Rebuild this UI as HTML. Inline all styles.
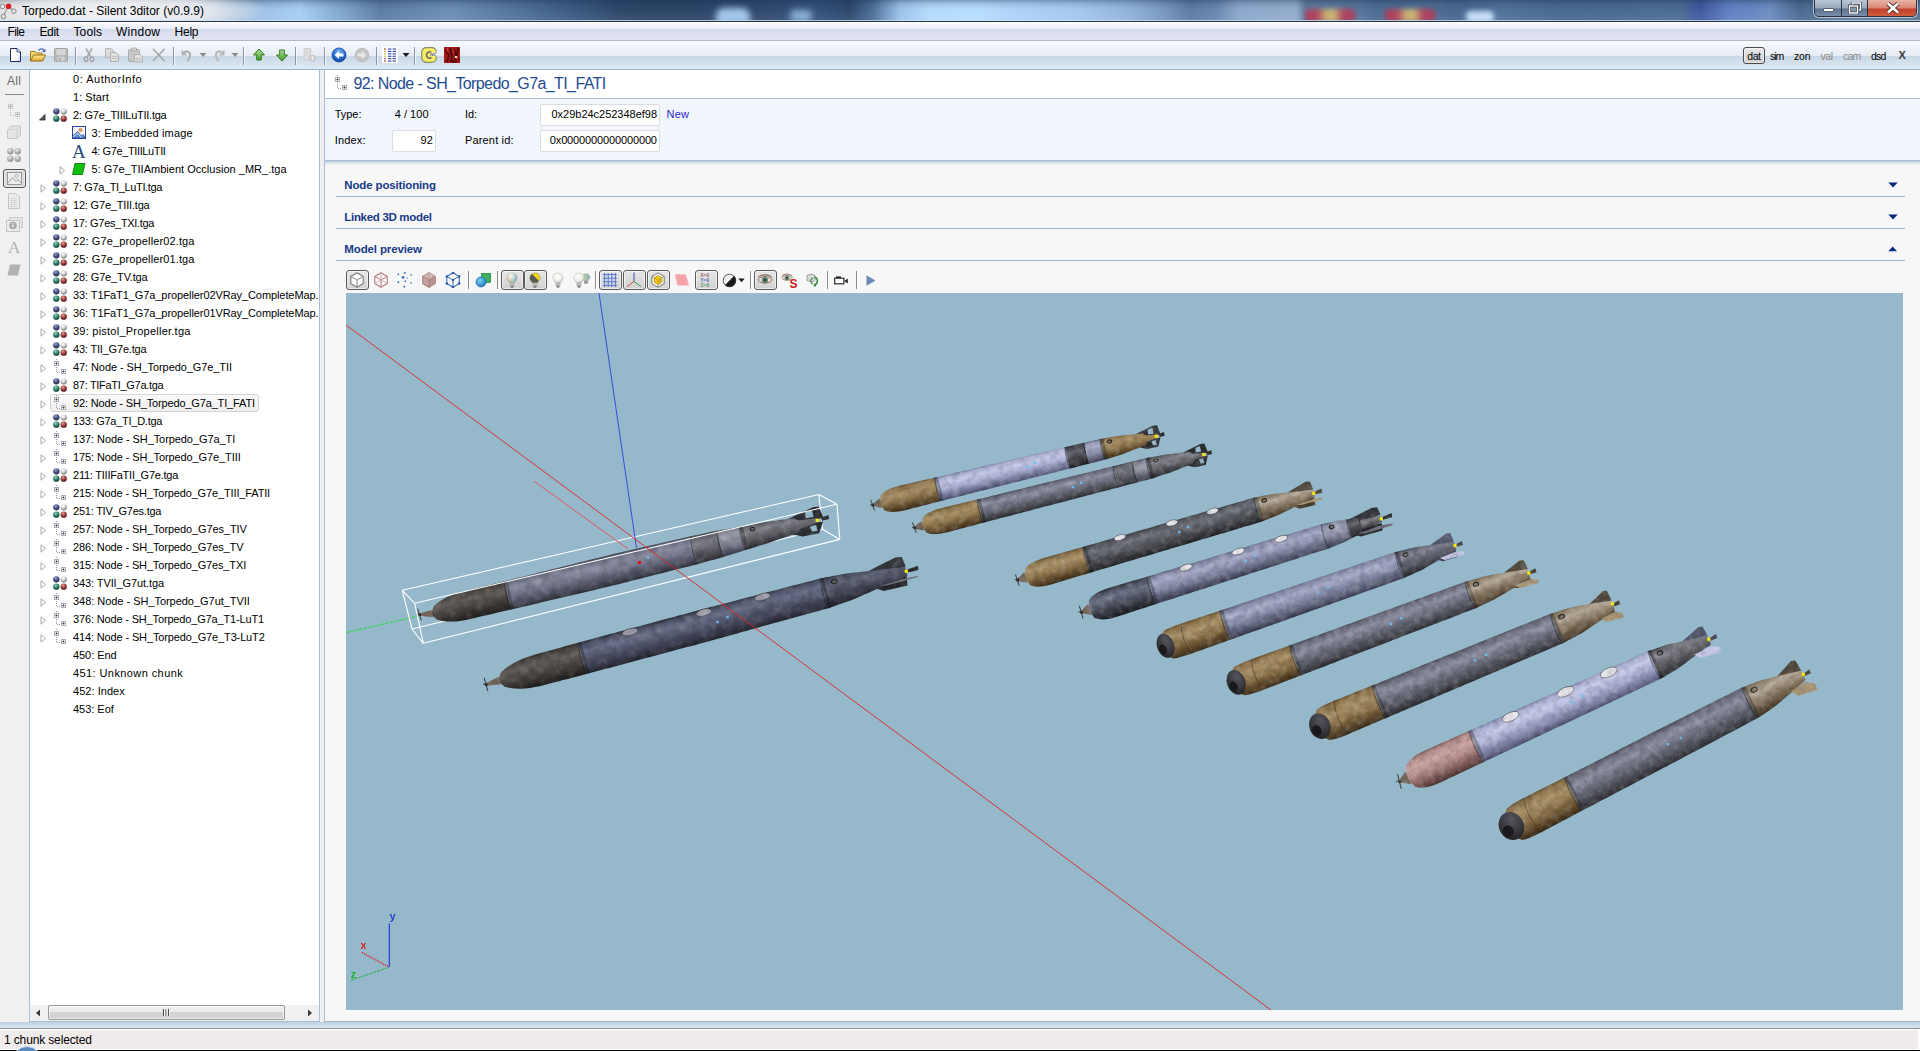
<!DOCTYPE html>
<html lang="en"><head><meta charset="utf-8"><title>Torpedo.dat - Silent 3ditor (v0.9.9)</title>
<style>
*{box-sizing:border-box;margin:0;padding:0}
html,body{width:1920px;height:1051px;overflow:hidden;background:#f7f8fa;font-family:"Liberation Sans",sans-serif}
.a{position:absolute}
.t{position:absolute;white-space:pre}
#title{left:0;top:0;width:1920px;height:21px;background:
 linear-gradient(90deg,#d6d6d3 0px,#d9dbdd 120px,#c9d3de 200px,#a9c2dc 235px,#9cc0e6 262px,#a6cef2 300px,#86acd4 335px,#5b7ca3 380px,#6c8eb5 450px,#4f7098 520px,#3f5f88 560px,#2c4669 620px,#2a4366 690px,#2d476b 722px,#2f496e 768px,#34507a 800px,#33507a 822px,#2c476b 850px,#4a6d96 872px,#9cc2ea 900px,#b4dafc 930px,#b6dcfd 980px,#aed3f8 1010px,#a3c6ee 1080px,#8fb1da 1130px,#7595bd 1165px,#5b7ba3 1190px,#6785ad 1215px,#8ba7ca 1240px,#91abcc 1296px,#5f7a9f 1306px,#56759b 1360px,#4b6a92 1375px,#4e6d94 1433px,#46668e 1455px,#4f7098 1500px,#476890 1560px,#4a6b93 1680px,#4057a0 1700px,#5f80c4 1730px,#6c8cc0 1770px,#4a6a90 1800px,#5c7a9c 1850px,#54718f 1920px)}
#title:before{content:"";position:absolute;left:0;top:0;width:1920px;height:21px;background:linear-gradient(180deg,rgba(20,40,70,.35) 0,rgba(20,40,70,.12) 4px,rgba(255,255,255,0) 9px,rgba(255,255,255,.08) 21px)}
#tline{left:0;top:20px;width:1920px;height:2px;background:linear-gradient(180deg,rgba(205,228,246,.75) 0,rgba(205,228,246,.75) 1px,#2a3442 1px,#2a3442 2px)}
#menu{left:0;top:22px;width:1920px;height:19px;background:linear-gradient(180deg,#ffffff 0,#f4f5fb 3px,#e9ecf6 7px,#d3daec 7px,#dcdff0 12px,#e2e4f3 18px);border-bottom:1px solid #b5b7c6}
#tool{left:0;top:41px;width:1920px;height:28px;background:linear-gradient(180deg,#f8f9fd 0,#eef2f8 8px,#e6ecf4 15px,#c8d7e6 15px,#d2dfeb 21px,#dee8f2 26px,#ddeafa 27px,#ddeafa 28px);}
#toolb{left:0;top:69px;width:1920px;height:1px;background:#9fb3c8}

#strip{left:0;top:70px;width:29px;height:952px;background:#f0f0f0}
#tree{left:29px;top:70px;width:291px;height:952px;background:#fff;border-left:1px solid #a9bdd6;border-right:1px solid #a9bdd6;border-bottom:1px solid #a9bdd6;overflow:hidden}
#split{left:320px;top:70px;width:4px;height:952px;background:#f0f0f0}

#rp{left:324px;top:70px;width:1596px;height:952px;background:#f7f7f7;border-left:1px solid #a9bdd6}
#hd{left:325px;top:70px;width:1595px;height:29px;background:#fff;border-bottom:1px solid #a9bdd6}
#info{left:325px;top:99px;width:1595px;height:62px;background:#f1f5fc;border-bottom:1px solid #a7bdd8}
#infosh{left:325px;top:161px;width:1595px;height:6px;background:linear-gradient(180deg,#b9c7d8 0,#dfe5ec 2px,#f2f4f6 4px,#f7f7f7 6px)}
.tb{position:absolute;background:#fff;border:1px solid #d9dde3;border-radius:2px}
.hl{position:absolute;left:336px;width:1569px;height:1px;background:#9fb1c7}
.pb{position:absolute;top:269px;width:23px;height:22px;border:1px solid #5a5a5a;border-radius:3px;background:linear-gradient(180deg,#e6e6e6,#d2d2d2);box-shadow:inset 0 0 0 1px rgba(255,255,255,.55)}
#band{left:0;top:1021px;width:1920px;height:9px;background:linear-gradient(180deg,#a4b6c8 0,#a4b6c8 1px,#bccfe0 1px,#d8e8f4 7px,#868e98 7px,#868e98 8px,#ffffff 8px)}
#status{left:0;top:1030px;width:1920px;height:20px;background:#f0eceb;border-bottom:1px solid #fff;border-right:2px solid #fff}
#bl{left:0;top:1050px;width:1920px;height:1px;background:#0a0a0a}
</style></head>
<body>
<div id="rp" class="a"></div><div id="hd" class="a"></div><div id="info" class="a"></div><div id="infosh" class="a"></div>
<svg class="a" style="left:333px;top:75px" width="16" height="16" viewBox="0 0 16 16"><g opacity="1.0"><path d="M4.5 0 V13.5 H10" stroke="#9a9a9a" stroke-width="1" stroke-dasharray="1 1" fill="none"/><rect x="2.5" y="2.5" width="4" height="4" fill="#fff" stroke="#a4aeb8" stroke-width="1"/><path d="M3.4 4.5H5.6M4.5 3.4V5.6" stroke="#3a3e44" stroke-width=".9"/><rect x="9.5" y="10.5" width="4" height="4" fill="#fff" stroke="#a4aeb8" stroke-width="1"/><path d="M10.4 12.5H12.6M11.5 11.4V13.6" stroke="#3a3e44" stroke-width=".9"/></g></svg>
<div class="tb" style="left:540px;top:104px;width:120px;height:22px"></div>
<div class="tb" style="left:392px;top:130px;width:44px;height:22px"></div>
<div class="tb" style="left:540px;top:130px;width:120px;height:22px"></div>
<div class="hl" style="top:196px"></div>
<svg class="a" style="left:1888px;top:182px" width="10" height="6" viewBox="0 0 10 6"><path d="M.3 .6 H9.7 L5 5.6 Z" fill="#0a2a82"/></svg>
<div class="hl" style="top:228px"></div>
<svg class="a" style="left:1888px;top:214px" width="10" height="6" viewBox="0 0 10 6"><path d="M.3 .6 H9.7 L5 5.6 Z" fill="#0a2a82"/></svg>
<div class="hl" style="top:260px"></div>
<svg class="a" style="left:1888px;top:246px" width="10" height="6" viewBox="0 0 10 6"><path d="M.3 5.2 H9 L4.7 .6 Z" fill="#0a2a82"/></svg>
<div id="band" class="a"></div><div id="status" class="a"></div><div id="bl" class="a"></div>
<div class="a" style="left:12px;top:1046px;width:30px;height:30px;border-radius:15px;border:1px solid #cfe4f6;background:#5a8cc0"></div>
<div id="strip" class="a"></div><div id="tree" class="a"></div><div id="split" class="a"></div>
<svg class="a" style="left:0px;top:0px" width="0" height="0" viewBox="0 0 0 0"><defs>
<radialGradient id="bB" cx=".4" cy=".3" r=".75"><stop offset="0" stop-color="#9aa2c8"/><stop offset=".5" stop-color="#4a5484"/><stop offset="1" stop-color="#1c2040"/></radialGradient>
<radialGradient id="bW" cx=".4" cy=".3" r=".75"><stop offset="0" stop-color="#ffffff"/><stop offset=".55" stop-color="#c9c9c9"/><stop offset="1" stop-color="#5a5a5a"/></radialGradient>
<radialGradient id="bG" cx=".4" cy=".3" r=".75"><stop offset="0" stop-color="#8fd8c0"/><stop offset=".5" stop-color="#2f806a"/><stop offset="1" stop-color="#0c3a30"/></radialGradient>
<radialGradient id="bR" cx=".4" cy=".3" r=".75"><stop offset="0" stop-color="#e0a098"/><stop offset=".5" stop-color="#9c3e3a"/><stop offset="1" stop-color="#421412"/></radialGradient>
<radialGradient id="bY" cx=".4" cy=".3" r=".75"><stop offset="0" stop-color="#ececec"/><stop offset=".55" stop-color="#b0b0b0"/><stop offset="1" stop-color="#8c8c8c"/></radialGradient>
</defs></svg>
<div class="a" style="left:5px;top:94px;width:19px;height:1px;background:#8a8a8a"></div>
<svg class="a" style="left:6px;top:102px" width="16" height="16" viewBox="0 0 16 16"><g opacity="0.55"><path d="M4.5 0 V13.5 H10" stroke="#9a9a9a" stroke-width="1" stroke-dasharray="1 1" fill="none"/><rect x="2.5" y="2.5" width="4" height="4" fill="#fff" stroke="#a4aeb8" stroke-width="1"/><path d="M3.4 4.5H5.6M4.5 3.4V5.6" stroke="#3a3e44" stroke-width=".9"/><rect x="9.5" y="10.5" width="4" height="4" fill="#fff" stroke="#a4aeb8" stroke-width="1"/><path d="M10.4 12.5H12.6M11.5 11.4V13.6" stroke="#3a3e44" stroke-width=".9"/></g></svg>
<svg class="a" style="left:6px;top:124px" width="16" height="17" viewBox="0 0 16 17"><path d="M1.5 5.5 L5 2 H14.5 V11 L11 14.5 H1.5 Z" fill="#e4e4e4" stroke="#c6c6c6"/><path d="M1.5 5.5 H11 V14.5 M11 5.5 L14.5 2" fill="none" stroke="#cfcfcf"/></svg>
<svg class="a" style="left:6px;top:147px" width="16" height="16" viewBox="0 0 16 16"><circle cx="4.3" cy="4.3" r="3.2" fill="url(#bY)"/><circle cx="11.7" cy="4.3" r="3.2" fill="url(#bY)"/><circle cx="4.3" cy="11.7" r="3.2" fill="url(#bY)"/><circle cx="11.7" cy="11.7" r="3.2" fill="url(#bY)"/></svg>
<div class="a" style="left:3px;top:169px;width:23px;height:19px;border:1px solid #555;border-radius:3px;background:#d9d9d9;box-shadow:inset 0 0 0 1px #ececec"></div>
<svg class="a" style="left:7px;top:172px" width="15" height="13" viewBox="0 0 15 13"><rect x=".5" y=".5" width="14" height="12" fill="#ececec" stroke="#9a9a9a"/><circle cx="9.5" cy="4" r="1.5" fill="none" stroke="#a0a0a0" stroke-width=".8"/><path d="M1 11 L5.5 5.5 L9 9.5 L11 7.5 L14 11" fill="none" stroke="#a0a0a0" stroke-width="1"/></svg>
<svg class="a" style="left:8px;top:193px" width="12" height="16" viewBox="0 0 12 16"><path d="M.5 .5 H8 L11.5 4 V15.5 H.5 Z" fill="#ececec" stroke="#c4c4c4"/><path d="M2.5 5.5H9M2.5 7.5H9M2.5 9.5H9M2.5 11.5H9M2.5 13.5H9" stroke="#c0c0c0" stroke-width=".9" stroke-dasharray="2 1"/></svg>
<svg class="a" style="left:6px;top:217px" width="17" height="15" viewBox="0 0 17 15"><rect x="3.5" y=".5" width="13" height="10" fill="#e6e6e6" stroke="#cacaca"/><rect x=".5" y="3.5" width="13" height="11" fill="#ececec" stroke="#c4c4c4"/><circle cx="7" cy="8.5" r="3.8" fill="#a8a8a8"/><path d="M7 6V6.8M7 7.6V10.4" stroke="#f4f4f4" stroke-width="1.3"/></svg>
<svg class="a" style="left:7px;top:264px" width="14" height="12" viewBox="0 0 14 12"><path d="M3 .5 H13.5 L11 11.5 H.5 Z" fill="#b2b2b2"/></svg>
<svg class="a" style="left:38.5px;top:114px" width="7" height="7" viewBox="0 0 7 7"><path d="M6 .5 V6 H.5 Z" fill="#595959" stroke="#262626" stroke-width=".8"/></svg>
<svg class="a" style="left:52px;top:107px" width="16" height="16" viewBox="0 0 16 16"><circle cx="4.3" cy="4.3" r="3.15" fill="url(#bB)"/><circle cx="11.7" cy="4.3" r="3.15" fill="url(#bW)"/><circle cx="4.3" cy="11.7" r="3.15" fill="url(#bG)"/><circle cx="11.7" cy="11.7" r="3.15" fill="url(#bR)"/></svg>
<svg class="a" style="left:72px;top:126px" width="14" height="13" viewBox="0 0 14 13"><rect x=".5" y=".5" width="13" height="12" fill="#f4f7fc" stroke="#2a3f9a"/><circle cx="8.5" cy="4" r="1.6" fill="#f0a040" stroke="#c06820" stroke-width=".6"/><path d="M1 12 L1 9.5 L5.5 5.5 L9.5 10 L11 8.5 L13 10.5 V12 Z" fill="#5b8bd0" stroke="#2a4a9a" stroke-width=".7"/><path d="M1 11 L5.5 7 L9.5 11.5" fill="none" stroke="#fff" stroke-width=".8"/></svg>
<svg class="a" style="left:58.5px;top:165.5px" width="7" height="9" viewBox="0 0 7 9"><path d="M1 .8 L5.6 4.5 L1 8.2 Z" fill="#fff" stroke="#a6a6a6" stroke-width="1"/></svg>
<svg class="a" style="left:72px;top:163px" width="14" height="12" viewBox="0 0 14 12"><path d="M3 .5 H13 L10.5 11.5 H.5 Z" fill="#10c010" stroke="#0a7a0a" stroke-width=".9"/></svg>
<svg class="a" style="left:39.5px;top:183.5px" width="7" height="9" viewBox="0 0 7 9"><path d="M1 .8 L5.6 4.5 L1 8.2 Z" fill="#fff" stroke="#a6a6a6" stroke-width="1"/></svg>
<svg class="a" style="left:52px;top:179px" width="16" height="16" viewBox="0 0 16 16"><circle cx="4.3" cy="4.3" r="3.15" fill="url(#bB)"/><circle cx="11.7" cy="4.3" r="3.15" fill="url(#bW)"/><circle cx="4.3" cy="11.7" r="3.15" fill="url(#bG)"/><circle cx="11.7" cy="11.7" r="3.15" fill="url(#bR)"/></svg>
<svg class="a" style="left:39.5px;top:201.5px" width="7" height="9" viewBox="0 0 7 9"><path d="M1 .8 L5.6 4.5 L1 8.2 Z" fill="#fff" stroke="#a6a6a6" stroke-width="1"/></svg>
<svg class="a" style="left:52px;top:197px" width="16" height="16" viewBox="0 0 16 16"><circle cx="4.3" cy="4.3" r="3.15" fill="url(#bB)"/><circle cx="11.7" cy="4.3" r="3.15" fill="url(#bW)"/><circle cx="4.3" cy="11.7" r="3.15" fill="url(#bG)"/><circle cx="11.7" cy="11.7" r="3.15" fill="url(#bR)"/></svg>
<svg class="a" style="left:39.5px;top:219.5px" width="7" height="9" viewBox="0 0 7 9"><path d="M1 .8 L5.6 4.5 L1 8.2 Z" fill="#fff" stroke="#a6a6a6" stroke-width="1"/></svg>
<svg class="a" style="left:52px;top:215px" width="16" height="16" viewBox="0 0 16 16"><circle cx="4.3" cy="4.3" r="3.15" fill="url(#bB)"/><circle cx="11.7" cy="4.3" r="3.15" fill="url(#bW)"/><circle cx="4.3" cy="11.7" r="3.15" fill="url(#bG)"/><circle cx="11.7" cy="11.7" r="3.15" fill="url(#bR)"/></svg>
<svg class="a" style="left:39.5px;top:237.5px" width="7" height="9" viewBox="0 0 7 9"><path d="M1 .8 L5.6 4.5 L1 8.2 Z" fill="#fff" stroke="#a6a6a6" stroke-width="1"/></svg>
<svg class="a" style="left:52px;top:233px" width="16" height="16" viewBox="0 0 16 16"><circle cx="4.3" cy="4.3" r="3.15" fill="url(#bB)"/><circle cx="11.7" cy="4.3" r="3.15" fill="url(#bW)"/><circle cx="4.3" cy="11.7" r="3.15" fill="url(#bG)"/><circle cx="11.7" cy="11.7" r="3.15" fill="url(#bR)"/></svg>
<svg class="a" style="left:39.5px;top:255.5px" width="7" height="9" viewBox="0 0 7 9"><path d="M1 .8 L5.6 4.5 L1 8.2 Z" fill="#fff" stroke="#a6a6a6" stroke-width="1"/></svg>
<svg class="a" style="left:52px;top:251px" width="16" height="16" viewBox="0 0 16 16"><circle cx="4.3" cy="4.3" r="3.15" fill="url(#bB)"/><circle cx="11.7" cy="4.3" r="3.15" fill="url(#bW)"/><circle cx="4.3" cy="11.7" r="3.15" fill="url(#bG)"/><circle cx="11.7" cy="11.7" r="3.15" fill="url(#bR)"/></svg>
<svg class="a" style="left:39.5px;top:273.5px" width="7" height="9" viewBox="0 0 7 9"><path d="M1 .8 L5.6 4.5 L1 8.2 Z" fill="#fff" stroke="#a6a6a6" stroke-width="1"/></svg>
<svg class="a" style="left:52px;top:269px" width="16" height="16" viewBox="0 0 16 16"><circle cx="4.3" cy="4.3" r="3.15" fill="url(#bB)"/><circle cx="11.7" cy="4.3" r="3.15" fill="url(#bW)"/><circle cx="4.3" cy="11.7" r="3.15" fill="url(#bG)"/><circle cx="11.7" cy="11.7" r="3.15" fill="url(#bR)"/></svg>
<svg class="a" style="left:39.5px;top:291.5px" width="7" height="9" viewBox="0 0 7 9"><path d="M1 .8 L5.6 4.5 L1 8.2 Z" fill="#fff" stroke="#a6a6a6" stroke-width="1"/></svg>
<svg class="a" style="left:52px;top:287px" width="16" height="16" viewBox="0 0 16 16"><circle cx="4.3" cy="4.3" r="3.15" fill="url(#bB)"/><circle cx="11.7" cy="4.3" r="3.15" fill="url(#bW)"/><circle cx="4.3" cy="11.7" r="3.15" fill="url(#bG)"/><circle cx="11.7" cy="11.7" r="3.15" fill="url(#bR)"/></svg>
<svg class="a" style="left:39.5px;top:309.5px" width="7" height="9" viewBox="0 0 7 9"><path d="M1 .8 L5.6 4.5 L1 8.2 Z" fill="#fff" stroke="#a6a6a6" stroke-width="1"/></svg>
<svg class="a" style="left:52px;top:305px" width="16" height="16" viewBox="0 0 16 16"><circle cx="4.3" cy="4.3" r="3.15" fill="url(#bB)"/><circle cx="11.7" cy="4.3" r="3.15" fill="url(#bW)"/><circle cx="4.3" cy="11.7" r="3.15" fill="url(#bG)"/><circle cx="11.7" cy="11.7" r="3.15" fill="url(#bR)"/></svg>
<svg class="a" style="left:39.5px;top:327.5px" width="7" height="9" viewBox="0 0 7 9"><path d="M1 .8 L5.6 4.5 L1 8.2 Z" fill="#fff" stroke="#a6a6a6" stroke-width="1"/></svg>
<svg class="a" style="left:52px;top:323px" width="16" height="16" viewBox="0 0 16 16"><circle cx="4.3" cy="4.3" r="3.15" fill="url(#bB)"/><circle cx="11.7" cy="4.3" r="3.15" fill="url(#bW)"/><circle cx="4.3" cy="11.7" r="3.15" fill="url(#bG)"/><circle cx="11.7" cy="11.7" r="3.15" fill="url(#bR)"/></svg>
<svg class="a" style="left:39.5px;top:345.5px" width="7" height="9" viewBox="0 0 7 9"><path d="M1 .8 L5.6 4.5 L1 8.2 Z" fill="#fff" stroke="#a6a6a6" stroke-width="1"/></svg>
<svg class="a" style="left:52px;top:341px" width="16" height="16" viewBox="0 0 16 16"><circle cx="4.3" cy="4.3" r="3.15" fill="url(#bB)"/><circle cx="11.7" cy="4.3" r="3.15" fill="url(#bW)"/><circle cx="4.3" cy="11.7" r="3.15" fill="url(#bG)"/><circle cx="11.7" cy="11.7" r="3.15" fill="url(#bR)"/></svg>
<svg class="a" style="left:39.5px;top:363.5px" width="7" height="9" viewBox="0 0 7 9"><path d="M1 .8 L5.6 4.5 L1 8.2 Z" fill="#fff" stroke="#a6a6a6" stroke-width="1"/></svg>
<svg class="a" style="left:52px;top:359px" width="16" height="16" viewBox="0 0 16 16"><g opacity="1.0"><path d="M4.5 0 V13.5 H10" stroke="#9a9a9a" stroke-width="1" stroke-dasharray="1 1" fill="none"/><rect x="2.5" y="2.5" width="4" height="4" fill="#fff" stroke="#a4aeb8" stroke-width="1"/><path d="M3.4 4.5H5.6M4.5 3.4V5.6" stroke="#3a3e44" stroke-width=".9"/><rect x="9.5" y="10.5" width="4" height="4" fill="#fff" stroke="#a4aeb8" stroke-width="1"/><path d="M10.4 12.5H12.6M11.5 11.4V13.6" stroke="#3a3e44" stroke-width=".9"/></g></svg>
<svg class="a" style="left:39.5px;top:381.5px" width="7" height="9" viewBox="0 0 7 9"><path d="M1 .8 L5.6 4.5 L1 8.2 Z" fill="#fff" stroke="#a6a6a6" stroke-width="1"/></svg>
<svg class="a" style="left:52px;top:377px" width="16" height="16" viewBox="0 0 16 16"><circle cx="4.3" cy="4.3" r="3.15" fill="url(#bB)"/><circle cx="11.7" cy="4.3" r="3.15" fill="url(#bW)"/><circle cx="4.3" cy="11.7" r="3.15" fill="url(#bG)"/><circle cx="11.7" cy="11.7" r="3.15" fill="url(#bR)"/></svg>
<div class="a" style="left:50px;top:394px;width:209px;height:18px;border:1px solid #d4d4d4;border-radius:3px;background:linear-gradient(180deg,#fbfbfb,#eeeeee)"></div>
<svg class="a" style="left:39.5px;top:399.5px" width="7" height="9" viewBox="0 0 7 9"><path d="M1 .8 L5.6 4.5 L1 8.2 Z" fill="#fff" stroke="#a6a6a6" stroke-width="1"/></svg>
<svg class="a" style="left:52px;top:395px" width="16" height="16" viewBox="0 0 16 16"><g opacity="1.0"><path d="M4.5 0 V13.5 H10" stroke="#9a9a9a" stroke-width="1" stroke-dasharray="1 1" fill="none"/><rect x="2.5" y="2.5" width="4" height="4" fill="#fff" stroke="#a4aeb8" stroke-width="1"/><path d="M3.4 4.5H5.6M4.5 3.4V5.6" stroke="#3a3e44" stroke-width=".9"/><rect x="9.5" y="10.5" width="4" height="4" fill="#fff" stroke="#a4aeb8" stroke-width="1"/><path d="M10.4 12.5H12.6M11.5 11.4V13.6" stroke="#3a3e44" stroke-width=".9"/></g></svg>
<svg class="a" style="left:39.5px;top:417.5px" width="7" height="9" viewBox="0 0 7 9"><path d="M1 .8 L5.6 4.5 L1 8.2 Z" fill="#fff" stroke="#a6a6a6" stroke-width="1"/></svg>
<svg class="a" style="left:52px;top:413px" width="16" height="16" viewBox="0 0 16 16"><circle cx="4.3" cy="4.3" r="3.15" fill="url(#bB)"/><circle cx="11.7" cy="4.3" r="3.15" fill="url(#bW)"/><circle cx="4.3" cy="11.7" r="3.15" fill="url(#bG)"/><circle cx="11.7" cy="11.7" r="3.15" fill="url(#bR)"/></svg>
<svg class="a" style="left:39.5px;top:435.5px" width="7" height="9" viewBox="0 0 7 9"><path d="M1 .8 L5.6 4.5 L1 8.2 Z" fill="#fff" stroke="#a6a6a6" stroke-width="1"/></svg>
<svg class="a" style="left:52px;top:431px" width="16" height="16" viewBox="0 0 16 16"><g opacity="1.0"><path d="M4.5 0 V13.5 H10" stroke="#9a9a9a" stroke-width="1" stroke-dasharray="1 1" fill="none"/><rect x="2.5" y="2.5" width="4" height="4" fill="#fff" stroke="#a4aeb8" stroke-width="1"/><path d="M3.4 4.5H5.6M4.5 3.4V5.6" stroke="#3a3e44" stroke-width=".9"/><rect x="9.5" y="10.5" width="4" height="4" fill="#fff" stroke="#a4aeb8" stroke-width="1"/><path d="M10.4 12.5H12.6M11.5 11.4V13.6" stroke="#3a3e44" stroke-width=".9"/></g></svg>
<svg class="a" style="left:39.5px;top:453.5px" width="7" height="9" viewBox="0 0 7 9"><path d="M1 .8 L5.6 4.5 L1 8.2 Z" fill="#fff" stroke="#a6a6a6" stroke-width="1"/></svg>
<svg class="a" style="left:52px;top:449px" width="16" height="16" viewBox="0 0 16 16"><g opacity="1.0"><path d="M4.5 0 V13.5 H10" stroke="#9a9a9a" stroke-width="1" stroke-dasharray="1 1" fill="none"/><rect x="2.5" y="2.5" width="4" height="4" fill="#fff" stroke="#a4aeb8" stroke-width="1"/><path d="M3.4 4.5H5.6M4.5 3.4V5.6" stroke="#3a3e44" stroke-width=".9"/><rect x="9.5" y="10.5" width="4" height="4" fill="#fff" stroke="#a4aeb8" stroke-width="1"/><path d="M10.4 12.5H12.6M11.5 11.4V13.6" stroke="#3a3e44" stroke-width=".9"/></g></svg>
<svg class="a" style="left:39.5px;top:471.5px" width="7" height="9" viewBox="0 0 7 9"><path d="M1 .8 L5.6 4.5 L1 8.2 Z" fill="#fff" stroke="#a6a6a6" stroke-width="1"/></svg>
<svg class="a" style="left:52px;top:467px" width="16" height="16" viewBox="0 0 16 16"><circle cx="4.3" cy="4.3" r="3.15" fill="url(#bB)"/><circle cx="11.7" cy="4.3" r="3.15" fill="url(#bW)"/><circle cx="4.3" cy="11.7" r="3.15" fill="url(#bG)"/><circle cx="11.7" cy="11.7" r="3.15" fill="url(#bR)"/></svg>
<svg class="a" style="left:39.5px;top:489.5px" width="7" height="9" viewBox="0 0 7 9"><path d="M1 .8 L5.6 4.5 L1 8.2 Z" fill="#fff" stroke="#a6a6a6" stroke-width="1"/></svg>
<svg class="a" style="left:52px;top:485px" width="16" height="16" viewBox="0 0 16 16"><g opacity="1.0"><path d="M4.5 0 V13.5 H10" stroke="#9a9a9a" stroke-width="1" stroke-dasharray="1 1" fill="none"/><rect x="2.5" y="2.5" width="4" height="4" fill="#fff" stroke="#a4aeb8" stroke-width="1"/><path d="M3.4 4.5H5.6M4.5 3.4V5.6" stroke="#3a3e44" stroke-width=".9"/><rect x="9.5" y="10.5" width="4" height="4" fill="#fff" stroke="#a4aeb8" stroke-width="1"/><path d="M10.4 12.5H12.6M11.5 11.4V13.6" stroke="#3a3e44" stroke-width=".9"/></g></svg>
<svg class="a" style="left:39.5px;top:507.5px" width="7" height="9" viewBox="0 0 7 9"><path d="M1 .8 L5.6 4.5 L1 8.2 Z" fill="#fff" stroke="#a6a6a6" stroke-width="1"/></svg>
<svg class="a" style="left:52px;top:503px" width="16" height="16" viewBox="0 0 16 16"><circle cx="4.3" cy="4.3" r="3.15" fill="url(#bB)"/><circle cx="11.7" cy="4.3" r="3.15" fill="url(#bW)"/><circle cx="4.3" cy="11.7" r="3.15" fill="url(#bG)"/><circle cx="11.7" cy="11.7" r="3.15" fill="url(#bR)"/></svg>
<svg class="a" style="left:39.5px;top:525.5px" width="7" height="9" viewBox="0 0 7 9"><path d="M1 .8 L5.6 4.5 L1 8.2 Z" fill="#fff" stroke="#a6a6a6" stroke-width="1"/></svg>
<svg class="a" style="left:52px;top:521px" width="16" height="16" viewBox="0 0 16 16"><g opacity="1.0"><path d="M4.5 0 V13.5 H10" stroke="#9a9a9a" stroke-width="1" stroke-dasharray="1 1" fill="none"/><rect x="2.5" y="2.5" width="4" height="4" fill="#fff" stroke="#a4aeb8" stroke-width="1"/><path d="M3.4 4.5H5.6M4.5 3.4V5.6" stroke="#3a3e44" stroke-width=".9"/><rect x="9.5" y="10.5" width="4" height="4" fill="#fff" stroke="#a4aeb8" stroke-width="1"/><path d="M10.4 12.5H12.6M11.5 11.4V13.6" stroke="#3a3e44" stroke-width=".9"/></g></svg>
<svg class="a" style="left:39.5px;top:543.5px" width="7" height="9" viewBox="0 0 7 9"><path d="M1 .8 L5.6 4.5 L1 8.2 Z" fill="#fff" stroke="#a6a6a6" stroke-width="1"/></svg>
<svg class="a" style="left:52px;top:539px" width="16" height="16" viewBox="0 0 16 16"><g opacity="1.0"><path d="M4.5 0 V13.5 H10" stroke="#9a9a9a" stroke-width="1" stroke-dasharray="1 1" fill="none"/><rect x="2.5" y="2.5" width="4" height="4" fill="#fff" stroke="#a4aeb8" stroke-width="1"/><path d="M3.4 4.5H5.6M4.5 3.4V5.6" stroke="#3a3e44" stroke-width=".9"/><rect x="9.5" y="10.5" width="4" height="4" fill="#fff" stroke="#a4aeb8" stroke-width="1"/><path d="M10.4 12.5H12.6M11.5 11.4V13.6" stroke="#3a3e44" stroke-width=".9"/></g></svg>
<svg class="a" style="left:39.5px;top:561.5px" width="7" height="9" viewBox="0 0 7 9"><path d="M1 .8 L5.6 4.5 L1 8.2 Z" fill="#fff" stroke="#a6a6a6" stroke-width="1"/></svg>
<svg class="a" style="left:52px;top:557px" width="16" height="16" viewBox="0 0 16 16"><g opacity="1.0"><path d="M4.5 0 V13.5 H10" stroke="#9a9a9a" stroke-width="1" stroke-dasharray="1 1" fill="none"/><rect x="2.5" y="2.5" width="4" height="4" fill="#fff" stroke="#a4aeb8" stroke-width="1"/><path d="M3.4 4.5H5.6M4.5 3.4V5.6" stroke="#3a3e44" stroke-width=".9"/><rect x="9.5" y="10.5" width="4" height="4" fill="#fff" stroke="#a4aeb8" stroke-width="1"/><path d="M10.4 12.5H12.6M11.5 11.4V13.6" stroke="#3a3e44" stroke-width=".9"/></g></svg>
<svg class="a" style="left:39.5px;top:579.5px" width="7" height="9" viewBox="0 0 7 9"><path d="M1 .8 L5.6 4.5 L1 8.2 Z" fill="#fff" stroke="#a6a6a6" stroke-width="1"/></svg>
<svg class="a" style="left:52px;top:575px" width="16" height="16" viewBox="0 0 16 16"><circle cx="4.3" cy="4.3" r="3.15" fill="url(#bB)"/><circle cx="11.7" cy="4.3" r="3.15" fill="url(#bW)"/><circle cx="4.3" cy="11.7" r="3.15" fill="url(#bG)"/><circle cx="11.7" cy="11.7" r="3.15" fill="url(#bR)"/></svg>
<svg class="a" style="left:39.5px;top:597.5px" width="7" height="9" viewBox="0 0 7 9"><path d="M1 .8 L5.6 4.5 L1 8.2 Z" fill="#fff" stroke="#a6a6a6" stroke-width="1"/></svg>
<svg class="a" style="left:52px;top:593px" width="16" height="16" viewBox="0 0 16 16"><g opacity="1.0"><path d="M4.5 0 V13.5 H10" stroke="#9a9a9a" stroke-width="1" stroke-dasharray="1 1" fill="none"/><rect x="2.5" y="2.5" width="4" height="4" fill="#fff" stroke="#a4aeb8" stroke-width="1"/><path d="M3.4 4.5H5.6M4.5 3.4V5.6" stroke="#3a3e44" stroke-width=".9"/><rect x="9.5" y="10.5" width="4" height="4" fill="#fff" stroke="#a4aeb8" stroke-width="1"/><path d="M10.4 12.5H12.6M11.5 11.4V13.6" stroke="#3a3e44" stroke-width=".9"/></g></svg>
<svg class="a" style="left:39.5px;top:615.5px" width="7" height="9" viewBox="0 0 7 9"><path d="M1 .8 L5.6 4.5 L1 8.2 Z" fill="#fff" stroke="#a6a6a6" stroke-width="1"/></svg>
<svg class="a" style="left:52px;top:611px" width="16" height="16" viewBox="0 0 16 16"><g opacity="1.0"><path d="M4.5 0 V13.5 H10" stroke="#9a9a9a" stroke-width="1" stroke-dasharray="1 1" fill="none"/><rect x="2.5" y="2.5" width="4" height="4" fill="#fff" stroke="#a4aeb8" stroke-width="1"/><path d="M3.4 4.5H5.6M4.5 3.4V5.6" stroke="#3a3e44" stroke-width=".9"/><rect x="9.5" y="10.5" width="4" height="4" fill="#fff" stroke="#a4aeb8" stroke-width="1"/><path d="M10.4 12.5H12.6M11.5 11.4V13.6" stroke="#3a3e44" stroke-width=".9"/></g></svg>
<svg class="a" style="left:39.5px;top:633.5px" width="7" height="9" viewBox="0 0 7 9"><path d="M1 .8 L5.6 4.5 L1 8.2 Z" fill="#fff" stroke="#a6a6a6" stroke-width="1"/></svg>
<svg class="a" style="left:52px;top:629px" width="16" height="16" viewBox="0 0 16 16"><g opacity="1.0"><path d="M4.5 0 V13.5 H10" stroke="#9a9a9a" stroke-width="1" stroke-dasharray="1 1" fill="none"/><rect x="2.5" y="2.5" width="4" height="4" fill="#fff" stroke="#a4aeb8" stroke-width="1"/><path d="M3.4 4.5H5.6M4.5 3.4V5.6" stroke="#3a3e44" stroke-width=".9"/><rect x="9.5" y="10.5" width="4" height="4" fill="#fff" stroke="#a4aeb8" stroke-width="1"/><path d="M10.4 12.5H12.6M11.5 11.4V13.6" stroke="#3a3e44" stroke-width=".9"/></g></svg>
<div class="a" style="left:30px;top:1005px;width:289px;height:16px;background:#f0f0f0"></div>
<div class="a" style="left:48px;top:1005px;width:237px;height:15px;border:1px solid #989898;border-radius:2px;background:linear-gradient(180deg,#f3f3f3 0,#e9e9ea 45%,#d4d4d6 50%,#cfcfd1 100%);box-shadow:inset 0 0 0 1px rgba(255,255,255,.6)"></div>
<svg class="a" style="left:162px;top:1009px" width="8" height="8" viewBox="0 0 8 8"><path d="M1.5 0V7M4 0V7M6.5 0V7" stroke="#4a4a4a" stroke-width="1"/><path d="M2.5 0V7M5 0V7M7.5 0V7" stroke="#fff" stroke-width="1" opacity=".8"/></svg>
<svg class="a" style="left:35px;top:1009px" width="6" height="8" viewBox="0 0 6 8"><path d="M5 .5 V7.5 L1 4 Z" fill="#3c3c3c"/></svg>
<svg class="a" style="left:307px;top:1009px" width="6" height="8" viewBox="0 0 6 8"><path d="M1 .5 V7.5 L5 4 Z" fill="#3c3c3c"/></svg>
<div id="title" class="a"></div>
<div class="a" style="left:1305px;top:9px;width:50px;height:13px;border-radius:4px;filter:blur(2.5px);background:linear-gradient(90deg,#a83e5c 0,#b04860 25%,#c9b070 42%,#ccb674 58%,#b04860 75%,#a83e5c 100%)"></div>
<div class="a" style="left:1385px;top:9px;width:50px;height:13px;border-radius:4px;filter:blur(2.5px);background:linear-gradient(90deg,#a83e5c 0,#b04860 25%,#c9b070 42%,#ccb674 58%,#b04860 75%,#a83e5c 100%)"></div>
<div class="a" style="left:1466px;top:11px;width:28px;height:12px;border-radius:5px;filter:blur(2.5px);background:#c4ddf6"></div>
<div class="a" style="left:716px;top:8px;width:34px;height:16px;border-radius:8px 8px 0 0;filter:blur(3px);background:#a4c8ea"></div>
<div class="a" style="left:790px;top:10px;width:22px;height:12px;border-radius:5px;filter:blur(3px);background:#88aed2"></div>
<div class="a" style="left:-40px;top:-12px;width:310px;height:44px;border-radius:20px;background:radial-gradient(ellipse closest-side at center,rgba(244,245,247,.9) 0,rgba(238,240,244,.75) 60%,rgba(230,235,240,0) 100%)"></div>
<div id="tline" class="a"></div>
<svg class="a" style="left:0;top:2px" width="18" height="18" viewBox="0 0 18 18">
<path d="M8.5 4 L3 14.5 M8.5 4 L14 9" stroke="#9a9a9a" stroke-width="1.2" fill="none"/>
<circle cx="2.5" cy="4.5" r="2.3" fill="#e8e8e8" stroke="#8a8a8a" stroke-width="1"/>
<circle cx="8.5" cy="4.2" r="2.8" fill="#e02020"/>
<circle cx="13.8" cy="9.2" r="2.3" fill="#e4e4e4" stroke="#8a8a8a" stroke-width="1"/>
<circle cx="3.5" cy="14.5" r="2.3" fill="#e4e4e4" stroke="#8a8a8a" stroke-width="1"/></svg>
<div class="a" style="left:1814px;top:-1px;width:103px;height:18px;border:1px solid #2a3440;border-radius:0 0 5px 5px;overflow:hidden;box-shadow:0 0 0 1px rgba(255,255,255,.55)">
<div class="a" style="left:0;top:0;width:27px;height:17px;background:linear-gradient(180deg,#b9c6d6 0,#97a8bd 8px,#5d7390 9px,#7b92af 17px);border-right:1px solid #2a3440"></div>
<div class="a" style="left:27px;top:0;width:26px;height:17px;background:linear-gradient(180deg,#b9c6d6 0,#97a8bd 8px,#5d7390 9px,#7b92af 17px);border-right:1px solid #2a3440"></div>
<div class="a" style="left:53px;top:0;width:49px;height:17px;background:linear-gradient(180deg,#e7b3a6 0,#d98673 8px,#c2412a 9px,#d2603f 17px)"></div>
</div>
<div class="a" style="left:1823px;top:8px;width:11px;height:4px;background:#fff;border:1px solid #56606c;border-radius:1px"></div>
<svg class="a" style="left:1848px;top:2px" width="14" height="12" viewBox="0 0 14 12"><rect x="4.5" y="1" width="8" height="7" fill="none" stroke="#3d4650" stroke-width="3"/><rect x="4.5" y="1" width="8" height="7" fill="none" stroke="#fff" stroke-width="1.4"/><rect x="1.5" y="4" width="8" height="7" fill="#8497ae" stroke="#3d4650" stroke-width="3"/><rect x="1.5" y="4" width="8" height="7" fill="none" stroke="#fff" stroke-width="1.4"/></svg>
<svg class="a" style="left:1886px;top:2px" width="14" height="12" viewBox="0 0 14 12"><path d="M2 1.5 L12 10.5 M12 1.5 L2 10.5" stroke="#4a2a24" stroke-width="4.4"/><path d="M2 1.5 L12 10.5 M12 1.5 L2 10.5" stroke="#fff" stroke-width="2.6"/></svg>
<div id="menu" class="a"></div><div id="tool" class="a"></div><div id="toolb" class="a"></div>
<svg class="a" style="left:7px;top:47px" width="16" height="16" viewBox="0 0 16 16"><defs><linearGradient id="gnew" x1="0" y1="0" x2="1" y2="1"><stop offset="0" stop-color="#fff"/><stop offset=".6" stop-color="#fff"/><stop offset="1" stop-color="#c9d6ef"/></linearGradient></defs><path d="M3.5 1.5 H10 L13.5 5 V14.5 H3.5 Z" fill="url(#gnew)" stroke="#1c2a66" stroke-width="1"/><path d="M10 1.5 V5 H13.5" fill="#dfe6f5" stroke="#1c2a66" stroke-width=".8"/></svg>
<svg class="a" style="left:29px;top:47px" width="18" height="16" viewBox="0 0 18 16"><defs><linearGradient id="gop" x1="0" y1="0" x2="0" y2="1"><stop offset="0" stop-color="#ffe9a0"/><stop offset="1" stop-color="#e0a626"/></linearGradient></defs><path d="M1.5 14 V4.5 H6 L7.5 6 H13 V8" fill="#f5d67a" stroke="#a87a16" stroke-width="1"/><path d="M1.5 14 L4.5 8 H16.5 L13.5 14 Z" fill="url(#gop)" stroke="#9a6c10" stroke-width="1"/><path d="M9.5 3.5 C11.5 1.2 14.5 1.5 15.5 4" fill="none" stroke="#3a64b8" stroke-width="1.3"/><path d="M16.8 2 L16 5.4 L13 4.2 Z" fill="#3a64b8"/></svg>
<svg class="a" style="left:53px;top:47px" width="16" height="16" viewBox="0 0 16 16"><rect x="1.5" y="1.5" width="13" height="13" rx="1" fill="#b9b9b9" stroke="#a2a2a2"/><rect x="3.5" y="2" width="9" height="6" fill="#d6d6d6"/><rect x="4.5" y="10" width="7" height="4.5" fill="#d0d0d0"/><rect x="6" y="11" width="2" height="3" fill="#aaa"/></svg>
<div class="a" style="left:75px;top:47px;width:1px;height:18px;background:#8a96a6"></div><div class="a" style="left:76px;top:47px;width:1px;height:18px;background:#ffffff;opacity:.7"></div>
<svg class="a" style="left:81px;top:47px" width="16" height="16" viewBox="0 0 16 16"><path d="M5 1.5 L10 10 M11 1.5 L6 10" stroke="#a9a9a9" stroke-width="1.6" fill="none"/><ellipse cx="5" cy="12.2" rx="1.8" ry="2.2" fill="none" stroke="#a9a9a9" stroke-width="1.5"/><ellipse cx="11" cy="12.2" rx="1.8" ry="2.2" fill="none" stroke="#a9a9a9" stroke-width="1.5"/></svg>
<svg class="a" style="left:104px;top:47px" width="16" height="16" viewBox="0 0 16 16"><path d="M1.5 1.5 H7 L9.5 4 V10.5 H1.5 Z" fill="#dcdcdc" stroke="#b4b4b4"/><path d="M6.5 5.5 H12 L14.5 8 V14.5 H6.5 Z" fill="#e0e0e0" stroke="#b0b0b0"/><path d="M8 9.5H13M8 11.5H13" stroke="#b8b8b8" stroke-width=".8"/></svg>
<svg class="a" style="left:127px;top:47px" width="17" height="16" viewBox="0 0 17 16"><rect x="1.5" y="2.5" width="11" height="12" rx="1" fill="#c8c8c8" stroke="#adadad"/><rect x="4.5" y="1" width="5" height="3" fill="#d8d8d8" stroke="#a8a8a8" stroke-width=".8"/><path d="M7.5 7.5 H13 L15.5 10 V15 H7.5 Z" fill="#e2e2e2" stroke="#adadad"/><path d="M9 11.5H14M9 13H14" stroke="#b8b8b8" stroke-width=".8"/></svg>
<svg class="a" style="left:151px;top:47px" width="16" height="16" viewBox="0 0 16 16"><path d="M2.5 2.5 L13 13.5 M13 2.5 L2.5 13.5" stroke="#a8a8a8" stroke-width="1.8" stroke-linecap="round"/></svg>
<div class="a" style="left:173px;top:47px;width:1px;height:18px;background:#8a96a6"></div><div class="a" style="left:174px;top:47px;width:1px;height:18px;background:#ffffff;opacity:.7"></div>
<svg class="a" style="left:179px;top:47px" width="16" height="16" viewBox="0 0 16 16"><path d="M4 6.5 C8 2.5 12.5 5 10.5 10.5 C10 12 9 13.2 8 14" fill="none" stroke="#b2b2b2" stroke-width="2.2"/><path d="M2.5 2.5 V8.5 H8.5 Z" fill="#b2b2b2"/></svg>
<svg class="a" style="left:199px;top:52px" width="8" height="6" viewBox="0 0 8 6"><path d="M.5 1 H7.5 L4 5 Z" fill="#8c8c8c"/></svg>
<svg class="a" style="left:211px;top:47px" width="16" height="16" viewBox="0 0 16 16"><path d="M12 6.5 C8 2.5 3.5 5 5.5 10.5 C6 12 7 13.2 8 14" fill="none" stroke="#b8b8b8" stroke-width="2.2"/><path d="M13.5 2.5 V8.5 H7.5 Z" fill="#b8b8b8"/></svg>
<svg class="a" style="left:231px;top:52px" width="8" height="6" viewBox="0 0 8 6"><path d="M.5 1 H7.5 L4 5 Z" fill="#8c8c8c"/></svg>
<div class="a" style="left:243px;top:47px;width:1px;height:18px;background:#8a96a6"></div><div class="a" style="left:244px;top:47px;width:1px;height:18px;background:#ffffff;opacity:.7"></div>
<svg class="a" style="left:251px;top:47px" width="16" height="16" viewBox="0 0 16 16"><defs><linearGradient id="ggr" x1="0" y1="0" x2="0" y2="1"><stop offset="0" stop-color="#b5e29a"/><stop offset="1" stop-color="#3f9a28"/></linearGradient></defs><path d="M8 2 L13.5 8 H10.3 V13 H5.7 V8 H2.5 Z" fill="url(#ggr)" stroke="#2f7a1c" stroke-width="1" stroke-linejoin="round"/></svg>
<svg class="a" style="left:274px;top:47px" width="16" height="16" viewBox="0 0 16 16"><path d="M8 14 L13.5 8 H10.3 V3 H5.7 V8 H2.5 Z" fill="url(#ggr)" stroke="#2f7a1c" stroke-width="1" stroke-linejoin="round"/></svg>
<div class="a" style="left:295px;top:47px;width:1px;height:18px;background:#8a96a6"></div><div class="a" style="left:296px;top:47px;width:1px;height:18px;background:#ffffff;opacity:.7"></div>
<svg class="a" style="left:302px;top:47px" width="16" height="16" viewBox="0 0 16 16"><path d="M2 1.5 H9 L8 13 H2 Z" fill="#dcdcdc" stroke="#d0d0d0"/><circle cx="10.5" cy="11" r="3.3" fill="#c9c9c9"/><path d="M10.5 8.8 L12.3 11 H11.2 V13 H9.8 V11 H8.7 Z" fill="#f2f2f2"/></svg>
<div class="a" style="left:324px;top:47px;width:1px;height:18px;background:#8a96a6"></div><div class="a" style="left:325px;top:47px;width:1px;height:18px;background:#ffffff;opacity:.7"></div>
<svg class="a" style="left:331px;top:47px" width="16" height="16" viewBox="0 0 16 16"><defs><radialGradient id="gbk" cx=".5" cy=".3" r=".8"><stop offset="0" stop-color="#7db6f4"/><stop offset=".6" stop-color="#1f62c8"/><stop offset="1" stop-color="#0c3d98"/></radialGradient></defs><circle cx="8" cy="8" r="7" fill="url(#gbk)" stroke="#0f459e" stroke-width=".8"/><path d="M3.5 8 L8 4 V6.6 H12.5 V9.4 H8 V12 Z" fill="#fff"/></svg>
<svg class="a" style="left:354px;top:47px" width="16" height="16" viewBox="0 0 16 16"><circle cx="8" cy="8" r="6.8" fill="#c4c4c4" stroke="#b6b6b6" stroke-width=".8"/><path d="M12.5 8 L8 4 V6.6 H3.5 V9.4 H8 V12 Z" fill="#e8e8e8"/></svg>
<div class="a" style="left:376px;top:47px;width:1px;height:18px;background:#8a96a6"></div><div class="a" style="left:377px;top:47px;width:1px;height:18px;background:#ffffff;opacity:.7"></div>
<svg class="a" style="left:382px;top:47px" width="16" height="16" viewBox="0 0 16 16"><rect x="0" y="0" width="16" height="16" fill="#fdfdfe"/><rect x="2" y="1.5" width="2" height="1.1" fill="#c03030"/><rect x="6" y="1.5" width="3.4" height="1.1" fill="#3346a8"/><rect x="10.6" y="1.5" width="3.4" height="1.1" fill="#3346a8"/><rect x="2" y="3.9" width="2" height="1.1" fill="#c8a020"/><rect x="6" y="3.9" width="3.4" height="1.1" fill="#3346a8"/><rect x="10.6" y="3.9" width="3.4" height="1.1" fill="#3346a8"/><rect x="2" y="6.3" width="2" height="1.1" fill="#c8b828"/><rect x="6" y="6.3" width="3.4" height="1.1" fill="#3346a8"/><rect x="10.6" y="6.3" width="3.4" height="1.1" fill="#3346a8"/><rect x="2" y="8.7" width="2" height="1.1" fill="#b8c030"/><rect x="6" y="8.7" width="3.4" height="1.1" fill="#3346a8"/><rect x="10.6" y="8.7" width="3.4" height="1.1" fill="#3346a8"/><rect x="2" y="11.1" width="2" height="1.1" fill="#a04090"/><rect x="6" y="11.1" width="3.4" height="1.1" fill="#3346a8"/><rect x="10.6" y="11.1" width="3.4" height="1.1" fill="#3346a8"/><rect x="2" y="13.5" width="2" height="1.1" fill="#c03030"/><rect x="6" y="13.5" width="3.4" height="1.1" fill="#3346a8"/><rect x="10.6" y="13.5" width="3.4" height="1.1" fill="#3346a8"/></svg>
<svg class="a" style="left:402px;top:52px" width="8" height="6" viewBox="0 0 8 6"><path d="M.5 1 H7.5 L4 5 Z" fill="#1a1a1a"/></svg>
<div class="a" style="left:414px;top:47px;width:1px;height:18px;background:#8a96a6"></div><div class="a" style="left:415px;top:47px;width:1px;height:18px;background:#ffffff;opacity:.7"></div>
<svg class="a" style="left:421px;top:47px" width="16" height="16" viewBox="0 0 16 16"><rect x=".7" y=".7" width="14.6" height="14.6" rx="4.5" fill="#f4ee62" stroke="#8a8a70" stroke-width="1.2"/><path d="M10.5 5.5 C8 4 5.5 5.5 5.5 8 C5.5 10.5 8 12 10.5 10.5" fill="none" stroke="#6a6a6a" stroke-width="1.6"/><rect x="9" y="5.5" width="7" height="3.6" fill="#f4f4e8"/><text x="9.2" y="8.6" font-size="3.6" font-family="Liberation Sans, sans-serif" fill="#333" font-weight="bold">IVC</text></svg>
<svg class="a" style="left:444px;top:47px" width="16" height="16" viewBox="0 0 16 16"><rect x="0" y="0" width="16" height="16" fill="#a01818"/><path d="M1 3 L5 8 L3 15 M6 1 L8 9 L7 15 M10 2 L12 8 L11 15 M14 1 L13 8 L15 13" stroke="#4a0a0a" stroke-width="1.6" fill="none"/><path d="M3 1 L4 5 M9 3 L10 6 M13 9 L14 12" stroke="#d83a2a" stroke-width="1.2"/><rect x="11" y="9" width="2" height="2" fill="#f0e0d8"/><rect x="8" y="13" width="5" height="3" fill="#6a0c0c"/></svg>
<div class="a" style="left:1743px;top:47px;width:22px;height:17px;border:1px solid #4a4a4a;border-radius:3px;background:linear-gradient(180deg,#e8e8e8,#d0d0d2);box-shadow:inset 0 0 0 1px rgba(255,255,255,.5)"></div>
<div class="pb" style="left:346px;width:23px;top:270px;height:20px"></div>
<div class="pb" style="left:501px;width:23px;top:270px;height:20px"></div>
<div class="pb" style="left:524px;width:23px;top:270px;height:20px"></div>
<div class="pb" style="left:599px;width:23px;top:270px;height:20px"></div>
<div class="pb" style="left:623px;width:23px;top:270px;height:20px"></div>
<div class="pb" style="left:647px;width:23px;top:270px;height:20px"></div>
<div class="pb" style="left:695px;width:23px;top:270px;height:20px"></div>
<div class="pb" style="left:754px;width:23px;top:270px;height:20px"></div>
<svg class="a" style="left:349px;top:271.5px" width="16" height="16" viewBox="0 0 16 16"><path d="M8 .8 L14.2 4.4 V11.6 L8 15.2 L1.8 11.6 V4.4 Z" fill="#fbfbfb" stroke="#7c7c7c" stroke-width="1.1" stroke-linejoin="round"/><path d="M8 8 L1.8 4.4 M8 8 L14.2 4.4 M8 8 V15.2" fill="none" stroke="#8a8a8a" stroke-width="1"/></svg>
<svg class="a" style="left:373px;top:271.5px" width="16" height="16" viewBox="0 0 16 16"><path d="M8 .8 L14.2 4.4 V11.6 L8 15.2 L1.8 11.6 V4.4 Z" fill="none" stroke="#b07c7a" stroke-width="1.1" stroke-linejoin="round"/><path d="M8 8 L1.8 4.4 M8 8 L14.2 4.4 M8 8 V15.2" fill="none" stroke="#b07c7a" stroke-width="1"/><path d="M8 8 V.8 M8 8 L1.8 11.6 M8 8 L14.2 11.6" fill="none" stroke="#c9a3a1" stroke-width=".8"/></svg>
<svg class="a" style="left:396px;top:272px" width="17" height="16" viewBox="0 0 17 16"><rect x="8" y="0.2" width="1.6" height="1.6" fill="#2f6cb4"/><rect x="1.6" y="1.5" width="1.5" height="1.5" fill="#2f6cb4"/><rect x="14.5" y="2.2" width="1.4" height="1.4" fill="#2f6cb4"/><rect x="5.8" y="4.2" width="2.4" height="2.4" fill="#2f6cb4"/><rect x="1.5" y="9.4" width="1.7" height="1.7" fill="#2f6cb4"/><rect x="8.6" y="8.5" width="1.5" height="1.5" fill="#2f6cb4"/><rect x="14.2" y="10.2" width="1.4" height="1.4" fill="#2f6cb4"/><rect x="10.5" y="5.5" width="1.1" height="1.1" fill="#2f6cb4"/><rect x="7.4" y="13.8" width="1.7" height="1.7" fill="#2f6cb4"/></svg>
<svg class="a" style="left:421px;top:271.5px" width="16" height="16" viewBox="0 0 16 16"><path d="M8 .8 L14.2 4.4 V11.6 L8 15.2 L1.8 11.6 V4.4 Z" fill="#c9a9a7" stroke="#a87876" stroke-width="1.1" stroke-linejoin="round"/><path d="M8 8 L1.8 4.4 L8 .8 L14.2 4.4 Z" fill="#d4b8b6"/><path d="M8 8 L14.2 4.4 V11.6 L8 15.2 Z" fill="#b99593"/><path d="M8 8 L1.8 4.4 M8 8 L14.2 4.4 M8 8 V15.2" fill="none" stroke="#a87876" stroke-width="1"/><path d="M8 8 V.8 M8 8 L1.8 11.6 M8 8 L14.2 11.6" fill="none" stroke="#b58c8a" stroke-width=".6"/></svg>
<svg class="a" style="left:445px;top:271.5px" width="16" height="16" viewBox="0 0 16 16"><path d="M8 .8 L14.2 4.4 V11.6 L8 15.2 L1.8 11.6 V4.4 Z" fill="#fdfdfd" stroke="#3c6cb2" stroke-width="1.1" stroke-linejoin="round"/><path d="M8 8 L1.8 4.4 M8 8 L14.2 4.4 M8 8 V15.2" fill="none" stroke="#3c6cb2" stroke-width="1"/><circle cx="8" cy="0.9" r="1.25" fill="#2a5ca8"/><circle cx="14.2" cy="4.4" r="1.25" fill="#2a5ca8"/><circle cx="14.2" cy="11.6" r="1.25" fill="#2a5ca8"/><circle cx="8" cy="15.1" r="1.25" fill="#2a5ca8"/><circle cx="1.8" cy="11.6" r="1.25" fill="#2a5ca8"/><circle cx="1.8" cy="4.4" r="1.25" fill="#2a5ca8"/><circle cx="8" cy="8" r="1.25" fill="#2a5ca8"/></svg>
<div class="a" style="left:468px;top:271px;width:1px;height:18px;background:#8a8a8a"></div><div class="a" style="left:469px;top:271px;width:1px;height:18px;background:#fff;opacity:.7"></div>
<svg class="a" style="left:475px;top:272px" width="16" height="16" viewBox="0 0 16 16"><defs><radialGradient id="gbc" cx=".4" cy=".35" r=".7"><stop offset="0" stop-color="#7fd0f4"/><stop offset="1" stop-color="#1878c0"/></radialGradient></defs><rect x="6.5" y="1.5" width="9" height="9" fill="#3fae5a" stroke="#2a8a42" stroke-width=".8"/><circle cx="6" cy="10" r="5" fill="url(#gbc)" stroke="#1868a8" stroke-width=".7"/></svg>
<div class="a" style="left:497px;top:271px;width:1px;height:18px;background:#8a8a8a"></div><div class="a" style="left:498px;top:271px;width:1px;height:18px;background:#fff;opacity:.7"></div>
<svg class="a" style="left:504px;top:272px" width="16" height="16" viewBox="0 0 16 16"><defs><linearGradient id="rgb1" x1="0" y1="0" x2="1" y2="0"><stop offset="0" stop-color="#e8a098"/><stop offset=".5" stop-color="#9ed0a0"/><stop offset="1" stop-color="#8aa0dc"/></linearGradient><radialGradient id="wh1" cx=".4" cy=".3" r=".6"><stop offset="0" stop-color="#fff" stop-opacity=".9"/><stop offset="1" stop-color="#fff" stop-opacity="0"/></radialGradient></defs><path d="M8 1 C4.4 1 2.8 3.6 2.8 5.7 C2.8 7.8 4.6 9.2 5.4 10.8 H10.6 C11.4 9.2 13.2 7.8 13.2 5.7 C13.2 3.6 11.6 1 8 1 Z" fill="url(#rgb1)" stroke="#a8a8a8" stroke-width=".5"/><path d="M8 1 C4.4 1 2.8 3.6 2.8 5.7 C2.8 7.8 4.6 9.2 5.4 10.8 H10.6 C11.4 9.2 13.2 7.8 13.2 5.7 C13.2 3.6 11.6 1 8 1 Z" fill="url(#wh1)"/><rect x="5.7" y="10.8" width="4.6" height="3.4" fill="#9a9a9a"/><path d="M5.7 11.9H10.3M5.7 13H10.3" stroke="#e4e4e4" stroke-width=".6"/><rect x="6.6" y="14.2" width="2.8" height="1.3" fill="#5a5a5a"/></svg>
<svg class="a" style="left:527px;top:272px" width="16" height="16" viewBox="0 0 16 16"><path d="M8 1 C4.4 1 2.8 3.6 2.8 5.7 C2.8 7.8 4.6 9.2 5.4 10.8 H10.6 C11.4 9.2 13.2 7.8 13.2 5.7 C13.2 3.6 11.6 1 8 1 Z" fill="#f2d418" stroke="#8a8a60" stroke-width=".5"/><path d="M3.4 8.4 C2.4 6 2.8 3.4 5 1.9 L11.6 8.6 C11 9.4 10.8 10.2 10.6 10.8 H5.4 C5 9.8 4.2 9.2 3.4 8.4 Z" fill="#5a5a5a"/><rect x="5.7" y="10.8" width="4.6" height="3.4" fill="#9a9a9a"/><path d="M5.7 11.9H10.3M5.7 13H10.3" stroke="#e4e4e4" stroke-width=".6"/><rect x="6.6" y="14.2" width="2.8" height="1.3" fill="#5a5a5a"/></svg>
<svg class="a" style="left:550px;top:272px" width="16" height="16" viewBox="0 0 16 16"><defs><radialGradient id="wh2" cx=".42" cy=".35" r=".7"><stop offset="0" stop-color="#fff"/><stop offset=".6" stop-color="#eeeeea"/><stop offset="1" stop-color="#bcbcb6"/></radialGradient></defs><path d="M8 1 C4.4 1 2.8 3.6 2.8 5.7 C2.8 7.8 4.6 9.2 5.4 10.8 H10.6 C11.4 9.2 13.2 7.8 13.2 5.7 C13.2 3.6 11.6 1 8 1 Z" fill="url(#wh2)" stroke="#b8b8b4" stroke-width=".5"/><rect x="5.7" y="10.8" width="4.6" height="3.4" fill="#9a9a9a"/><path d="M5.7 11.9H10.3M5.7 13H10.3" stroke="#e4e4e4" stroke-width=".6"/><rect x="6.6" y="14.2" width="2.8" height="1.3" fill="#5a5a5a"/></svg>
<svg class="a" style="left:580px;top:273px" width="12" height="12" viewBox="0 0 16 16"><path d="M8 1 C4.4 1 2.8 3.6 2.8 5.7 C2.8 7.8 4.6 9.2 5.4 10.8 H10.6 C11.4 9.2 13.2 7.8 13.2 5.7 C13.2 3.6 11.6 1 8 1 Z" fill="url(#rgb1)" stroke="#a0a0a0" stroke-width=".6"/><rect x="5.7" y="10.8" width="4.6" height="3.4" fill="#8a8a8a"/></svg>
<svg class="a" style="left:571px;top:272px" width="16" height="16" viewBox="0 0 16 16"><path d="M8 1 C4.4 1 2.8 3.6 2.8 5.7 C2.8 7.8 4.6 9.2 5.4 10.8 H10.6 C11.4 9.2 13.2 7.8 13.2 5.7 C13.2 3.6 11.6 1 8 1 Z" fill="url(#wh2)" stroke="#b8b8b4" stroke-width=".5"/><rect x="5.7" y="10.8" width="4.6" height="3.4" fill="#9a9a9a"/><path d="M5.7 11.9H10.3M5.7 13H10.3" stroke="#e4e4e4" stroke-width=".6"/><rect x="6.6" y="14.2" width="2.8" height="1.3" fill="#5a5a5a"/></svg>
<div class="a" style="left:595px;top:271px;width:1px;height:18px;background:#8a8a8a"></div><div class="a" style="left:596px;top:271px;width:1px;height:18px;background:#fff;opacity:.7"></div>
<svg class="a" style="left:602px;top:272px" width="16" height="16" viewBox="0 0 16 16"><path d="M2.6 1 V15 M1 2.6 H15" stroke="#4672cc" stroke-width=".9"/><path d="M6.2 1 V15 M1 6.2 H15" stroke="#4672cc" stroke-width=".9"/><path d="M9.8 1 V15 M1 9.8 H15" stroke="#4672cc" stroke-width=".9"/><path d="M13.4 1 V15 M1 13.4 H15" stroke="#4672cc" stroke-width=".9"/></svg>
<svg class="a" style="left:626px;top:272px" width="16" height="16" viewBox="0 0 16 16"><path d="M8 9.5 V.5" stroke="#3848b0" stroke-width="1"/><path d="M8 9.5 L1 14.5" stroke="#d04040" stroke-width="1"/><path d="M8 9.5 L15 14.5" stroke="#38a048" stroke-width="1"/></svg>
<svg class="a" style="left:650px;top:271.5px" width="16" height="16" viewBox="0 0 16 16"><path d="M8 .8 L14.2 4.4 V11.6 L8 15.2 L1.8 11.6 V4.4 Z" fill="#f4f4f4" stroke="#7a7a7a" stroke-width="1" stroke-linejoin="round"/><path d="M8 8 L1.8 4.4 M8 8 L14.2 4.4 M8 8 V15.2" fill="none" stroke="#8a8a8a" stroke-width=".8"/><path d="M8 3.6 L11.8 5.8 V10.2 L8 12.4 L4.2 10.2 V5.8 Z" fill="#f2cc1c" stroke="#b89410" stroke-width=".7"/><path d="M8 8 L4.2 5.8 M8 8 L11.8 5.8 M8 8 V12.4" stroke="#b89410" stroke-width=".7"/><path d="M8 8 L11.8 5.8 V10.2 L8 12.4 Z" fill="#d8b010"/></svg>
<svg class="a" style="left:674px;top:272px" width="16" height="16" viewBox="0 0 16 16"><path d="M1.2 2.6 H11.6 L14.8 13.2 H3.6 Z" fill="#f6a2aa" stroke="#f0b4b8" stroke-width=".6"/></svg>
<svg class="a" style="left:697px;top:271px" width="19" height="18" viewBox="0 0 19 18"><text x="3.4" y="6.4" font-size="4.8" font-family="Liberation Mono, monospace" font-weight="bold" fill="#a06a70">X=0</text><text x="3.4" y="11.2" font-size="4.8" font-family="Liberation Mono, monospace" font-weight="bold" fill="#5a6ab0">Y=0</text><text x="3.4" y="16" font-size="4.8" font-family="Liberation Mono, monospace" font-weight="bold" fill="#5a9a6a">Z=0</text></svg>
<svg class="a" style="left:722px;top:273px" width="15" height="15" viewBox="0 0 15 15"><circle cx="7.5" cy="7.5" r="6.3" fill="#f4f4f4" stroke="#5a5a5a" stroke-width="1"/><path d="M12 3 A6.3 6.3 0 0 1 3 12 Z" fill="#1a1a1a"/></svg>
<svg class="a" style="left:738px;top:278px" width="7" height="5" viewBox="0 0 7 5"><path d="M.3 .5 H6.7 L3.5 4.3 Z" fill="#1a1a1a"/></svg>
<div class="a" style="left:750px;top:271px;width:1px;height:18px;background:#8a8a8a"></div><div class="a" style="left:751px;top:271px;width:1px;height:18px;background:#fff;opacity:.7"></div>
<svg class="a" style="left:757px;top:272px" width="16" height="16" viewBox="0 0 16 16"><path d="M.8 8 C4 3.4 12 3.4 15.2 8 C12 12.2 4 12.2 .8 8 Z" fill="#e8dcd4" stroke="#7a5a4a" stroke-width=".8"/><circle cx="8" cy="8" r="2.7" fill="#5a8a7a" stroke="#3a5a4a" stroke-width=".6"/><circle cx="8" cy="8" r="1.1" fill="#1a1a1a"/><path d="M1 5.5 C4.5 2 11.5 2 15 5.5" fill="none" stroke="#6a4a3a" stroke-width="1"/></svg>
<svg class="a" style="left:781px;top:272px" width="12" height="12" viewBox="0 0 16 16"><path d="M.8 8 C4 3.4 12 3.4 15.2 8 C12 12.2 4 12.2 .8 8 Z" fill="#e8dcd4" stroke="#7a5a4a" stroke-width=".8"/><circle cx="8" cy="8" r="2.7" fill="#5a8a7a" stroke="#3a5a4a" stroke-width=".6"/><circle cx="8" cy="8" r="1.1" fill="#1a1a1a"/><path d="M1 5.5 C4.5 2 11.5 2 15 5.5" fill="none" stroke="#6a4a3a" stroke-width="1"/></svg>
<svg class="a" style="left:805px;top:272px" width="16" height="16" viewBox="0 0 16 16"><path d="M2 3.5 L6 2 L10 3.5 V8.5 L6 10 L2 8.5 Z" fill="#d8dcd8" stroke="#8a908a" stroke-width=".8"/><path d="M9.5 5 C13.5 6 13.5 12 9 13.5" fill="none" stroke="#2a8a3a" stroke-width="1.4"/><path d="M9.8 11.5 L8.2 14.2 L11.4 14.6 Z" fill="#2a8a3a"/><path d="M8 12 C5 11 5 7 8 6" fill="none" stroke="#2a8a3a" stroke-width="1.2"/></svg>
<div class="a" style="left:827px;top:271px;width:1px;height:18px;background:#8a8a8a"></div><div class="a" style="left:828px;top:271px;width:1px;height:18px;background:#fff;opacity:.7"></div>
<svg class="a" style="left:834px;top:276px" width="15" height="9" viewBox="0 0 15 9"><rect x=".7" y="2.2" width="9.2" height="5.6" fill="#fff" stroke="#2a2a2a" stroke-width="1.2"/><path d="M10.2 5 L13.8 2.6 V7.4 Z" fill="#2a2a2a"/><rect x="2" y=".4" width="5" height="1.6" fill="#2a2a2a"/></svg>
<div class="a" style="left:856px;top:271px;width:1px;height:18px;background:#8a8a8a"></div><div class="a" style="left:857px;top:271px;width:1px;height:18px;background:#fff;opacity:.7"></div>
<svg class="a" style="left:866px;top:275px" width="10" height="11" viewBox="0 0 10 11"><path d="M.8 .8 V10.2 L9 5.5 Z" fill="#6c8cba" stroke="#5878a8" stroke-width=".5"/></svg>
<svg class="a" style="left:346px;top:293px" width="1557" height="717" viewBox="346 293 1557 717">
<defs><linearGradient id="g1" gradientUnits="userSpaceOnUse" x1="905.6" y1="484.3" x2="911.5" y2="508.6"><stop offset="0" stop-color="#6a5434"/><stop offset=".1" stop-color="#90764c"/><stop offset=".3" stop-color="#a89066"/><stop offset=".55" stop-color="#90764c"/><stop offset=".82" stop-color="#5e4829"/><stop offset="1" stop-color="#382a16"/></linearGradient><linearGradient id="g2" gradientUnits="userSpaceOnUse" x1="999.7" y1="461.9" x2="1005.4" y2="485.4"><stop offset="0" stop-color="#7a7ea2"/><stop offset=".1" stop-color="#a8acd0"/><stop offset=".3" stop-color="#c6caea"/><stop offset=".55" stop-color="#a8acd0"/><stop offset=".82" stop-color="#72769a"/><stop offset="1" stop-color="#4a4c68"/></linearGradient><linearGradient id="g3" gradientUnits="userSpaceOnUse" x1="1074.3" y1="445.0" x2="1079.5" y2="466.2"><stop offset="0" stop-color="#2e2f33"/><stop offset=".1" stop-color="#48494f"/><stop offset=".3" stop-color="#606168"/><stop offset=".55" stop-color="#48494f"/><stop offset=".82" stop-color="#2e2f33"/><stop offset="1" stop-color="#1a1a1c"/></linearGradient><linearGradient id="g4" gradientUnits="userSpaceOnUse" x1="1092.0" y1="440.9" x2="1097.0" y2="461.8"><stop offset="0" stop-color="#60647c"/><stop offset=".1" stop-color="#9094b0"/><stop offset=".3" stop-color="#aeb2ce"/><stop offset=".55" stop-color="#9094b0"/><stop offset=".82" stop-color="#5c5f76"/><stop offset="1" stop-color="#3c3e54"/></linearGradient><linearGradient id="g5" gradientUnits="userSpaceOnUse" x1="1127.0" y1="432.5" x2="1132.0" y2="453.1"><stop offset="0" stop-color="#6a5434"/><stop offset=".1" stop-color="#90764c"/><stop offset=".3" stop-color="#a89066"/><stop offset=".55" stop-color="#90764c"/><stop offset=".82" stop-color="#5e4829"/><stop offset="1" stop-color="#382a16"/></linearGradient><linearGradient id="g6" gradientUnits="userSpaceOnUse" x1="947.8" y1="506.5" x2="953.9" y2="530.6"><stop offset="0" stop-color="#6a5434"/><stop offset=".1" stop-color="#90764c"/><stop offset=".3" stop-color="#a89066"/><stop offset=".55" stop-color="#90764c"/><stop offset=".82" stop-color="#5e4829"/><stop offset="1" stop-color="#382a16"/></linearGradient><linearGradient id="g7" gradientUnits="userSpaceOnUse" x1="1045.0" y1="482.3" x2="1050.9" y2="505.6"><stop offset="0" stop-color="#4a4c56"/><stop offset=".1" stop-color="#6a6c7c"/><stop offset=".3" stop-color="#8a8da0"/><stop offset=".55" stop-color="#6a6c7c"/><stop offset=".82" stop-color="#46474f"/><stop offset="1" stop-color="#2a2a30"/></linearGradient><linearGradient id="g8" gradientUnits="userSpaceOnUse" x1="1122.6" y1="463.8" x2="1128.0" y2="484.9"><stop offset="0" stop-color="#3c3d42"/><stop offset=".1" stop-color="#62636a"/><stop offset=".3" stop-color="#787982"/><stop offset=".55" stop-color="#62636a"/><stop offset=".82" stop-color="#44454c"/><stop offset="1" stop-color="#28282c"/></linearGradient><linearGradient id="g9" gradientUnits="userSpaceOnUse" x1="1139.3" y1="459.8" x2="1144.6" y2="480.6"><stop offset="0" stop-color="#4a4c58"/><stop offset=".1" stop-color="#828492"/><stop offset=".3" stop-color="#9c9eae"/><stop offset=".55" stop-color="#828492"/><stop offset=".82" stop-color="#585a6c"/><stop offset="1" stop-color="#34353e"/></linearGradient><linearGradient id="g10" gradientUnits="userSpaceOnUse" x1="1173.7" y1="451.2" x2="1178.9" y2="471.7"><stop offset="0" stop-color="#3a3b40"/><stop offset=".1" stop-color="#636469"/><stop offset=".3" stop-color="#7e7f88"/><stop offset=".55" stop-color="#636469"/><stop offset=".82" stop-color="#404147"/><stop offset="1" stop-color="#26262a"/></linearGradient><linearGradient id="g11" gradientUnits="userSpaceOnUse" x1="1051.7" y1="555.8" x2="1059.4" y2="582.1"><stop offset="0" stop-color="#6a5434"/><stop offset=".1" stop-color="#90764c"/><stop offset=".3" stop-color="#a89066"/><stop offset=".55" stop-color="#90764c"/><stop offset=".82" stop-color="#5e4829"/><stop offset="1" stop-color="#382a16"/></linearGradient><linearGradient id="g12" gradientUnits="userSpaceOnUse" x1="1168.3" y1="521.9" x2="1175.9" y2="547.6"><stop offset="0" stop-color="#3c3d42"/><stop offset=".1" stop-color="#53555c"/><stop offset=".3" stop-color="#6c6e78"/><stop offset=".55" stop-color="#53555c"/><stop offset=".82" stop-color="#36373c"/><stop offset="1" stop-color="#1e1e22"/></linearGradient><linearGradient id="g13" gradientUnits="userSpaceOnUse" x1="1282.2" y1="489.4" x2="1289.2" y2="513.6"><stop offset="0" stop-color="#6a5c48"/><stop offset=".1" stop-color="#8e7e68"/><stop offset=".3" stop-color="#b4a898"/><stop offset=".55" stop-color="#8e7e68"/><stop offset=".82" stop-color="#5e4e3a"/><stop offset="1" stop-color="#3a2e20"/></linearGradient><linearGradient id="g14" gradientUnits="userSpaceOnUse" x1="1115.5" y1="586.1" x2="1124.3" y2="614.4"><stop offset="0" stop-color="#2e3038"/><stop offset=".1" stop-color="#4c5060"/><stop offset=".3" stop-color="#6c7288"/><stop offset=".55" stop-color="#4c5060"/><stop offset=".82" stop-color="#2e3038"/><stop offset="1" stop-color="#1a1b20"/></linearGradient><linearGradient id="g15" gradientUnits="userSpaceOnUse" x1="1233.8" y1="549.6" x2="1242.4" y2="577.1"><stop offset="0" stop-color="#60647e"/><stop offset=".1" stop-color="#868aa8"/><stop offset=".3" stop-color="#a6aac8"/><stop offset=".55" stop-color="#868aa8"/><stop offset=".82" stop-color="#565a72"/><stop offset="1" stop-color="#34364a"/></linearGradient><linearGradient id="g16" gradientUnits="userSpaceOnUse" x1="1333.3" y1="520.5" x2="1340.8" y2="544.6"><stop offset="0" stop-color="#5e6078"/><stop offset=".1" stop-color="#8a8ca6"/><stop offset=".3" stop-color="#a4a6be"/><stop offset=".55" stop-color="#8a8ca6"/><stop offset=".82" stop-color="#5a5c72"/><stop offset="1" stop-color="#363848"/></linearGradient><linearGradient id="g17" gradientUnits="userSpaceOnUse" x1="1352.1" y1="517.8" x2="1357.8" y2="536.3"><stop offset="0" stop-color="#2e2f33"/><stop offset=".1" stop-color="#48494f"/><stop offset=".3" stop-color="#606168"/><stop offset=".55" stop-color="#48494f"/><stop offset=".82" stop-color="#2e2f33"/><stop offset="1" stop-color="#1a1a1c"/></linearGradient><linearGradient id="g18" gradientUnits="userSpaceOnUse" x1="1369.3" y1="516.7" x2="1372.7" y2="527.3"><stop offset="0" stop-color="#3a3b40"/><stop offset=".1" stop-color="#636469"/><stop offset=".3" stop-color="#7e7f88"/><stop offset=".55" stop-color="#636469"/><stop offset=".82" stop-color="#404147"/><stop offset="1" stop-color="#26262a"/></linearGradient><linearGradient id="g19" gradientUnits="userSpaceOnUse" x1="1190.1" y1="620.6" x2="1200.4" y2="650.5"><stop offset="0" stop-color="#6a5434"/><stop offset=".1" stop-color="#90764c"/><stop offset=".3" stop-color="#a89066"/><stop offset=".55" stop-color="#90764c"/><stop offset=".82" stop-color="#5e4829"/><stop offset="1" stop-color="#382a16"/></linearGradient><linearGradient id="g20" gradientUnits="userSpaceOnUse" x1="1307.2" y1="580.6" x2="1317.2" y2="609.8"><stop offset="0" stop-color="#60647e"/><stop offset=".1" stop-color="#868aa8"/><stop offset=".3" stop-color="#a6aac8"/><stop offset=".55" stop-color="#868aa8"/><stop offset=".82" stop-color="#565a72"/><stop offset="1" stop-color="#34364a"/></linearGradient><linearGradient id="g21" gradientUnits="userSpaceOnUse" x1="1422.8" y1="542.5" x2="1431.7" y2="568.5"><stop offset="0" stop-color="#3e4048"/><stop offset=".1" stop-color="#5e606e"/><stop offset=".3" stop-color="#7a7c8e"/><stop offset=".55" stop-color="#5e606e"/><stop offset=".82" stop-color="#3c3d47"/><stop offset="1" stop-color="#26262c"/></linearGradient><radialGradient id="g22" cx=".62" cy=".3" r=".8"><stop offset="0" stop-color="#55565e"/><stop offset=".55" stop-color="#38383e"/><stop offset="1" stop-color="#1c1c20"/></radialGradient><linearGradient id="g23" gradientUnits="userSpaceOnUse" x1="1259.9" y1="656.1" x2="1271.4" y2="686.8"><stop offset="0" stop-color="#6a5434"/><stop offset=".1" stop-color="#90764c"/><stop offset=".3" stop-color="#a89066"/><stop offset=".55" stop-color="#90764c"/><stop offset=".82" stop-color="#5e4829"/><stop offset="1" stop-color="#382a16"/></linearGradient><linearGradient id="g24" gradientUnits="userSpaceOnUse" x1="1376.9" y1="612.8" x2="1388.1" y2="642.8"><stop offset="0" stop-color="#4a4c56"/><stop offset=".1" stop-color="#6a6c7c"/><stop offset=".3" stop-color="#8a8da0"/><stop offset=".55" stop-color="#6a6c7c"/><stop offset=".82" stop-color="#46474f"/><stop offset="1" stop-color="#2a2a30"/></linearGradient><linearGradient id="g25" gradientUnits="userSpaceOnUse" x1="1494.5" y1="570.8" x2="1504.5" y2="597.6"><stop offset="0" stop-color="#6a5c48"/><stop offset=".1" stop-color="#8e7e68"/><stop offset=".3" stop-color="#b4a898"/><stop offset=".55" stop-color="#8e7e68"/><stop offset=".82" stop-color="#5e4e3a"/><stop offset="1" stop-color="#3a2e20"/></linearGradient><radialGradient id="g26" cx=".62" cy=".3" r=".8"><stop offset="0" stop-color="#55565e"/><stop offset=".55" stop-color="#38383e"/><stop offset="1" stop-color="#1c1c20"/></radialGradient><linearGradient id="g27" gradientUnits="userSpaceOnUse" x1="1342.5" y1="697.4" x2="1356.2" y2="730.7"><stop offset="0" stop-color="#6a5434"/><stop offset=".1" stop-color="#90764c"/><stop offset=".3" stop-color="#a89066"/><stop offset=".55" stop-color="#90764c"/><stop offset=".82" stop-color="#5e4829"/><stop offset="1" stop-color="#382a16"/></linearGradient><linearGradient id="g28" gradientUnits="userSpaceOnUse" x1="1460.8" y1="648.9" x2="1474.3" y2="681.6"><stop offset="0" stop-color="#4a4c56"/><stop offset=".1" stop-color="#6a6c7c"/><stop offset=".3" stop-color="#8a8da0"/><stop offset=".55" stop-color="#6a6c7c"/><stop offset=".82" stop-color="#46474f"/><stop offset="1" stop-color="#2a2a30"/></linearGradient><linearGradient id="g29" gradientUnits="userSpaceOnUse" x1="1578.6" y1="602.1" x2="1590.8" y2="631.7"><stop offset="0" stop-color="#6a5c48"/><stop offset=".1" stop-color="#8e7e68"/><stop offset=".3" stop-color="#b4a898"/><stop offset=".55" stop-color="#8e7e68"/><stop offset=".82" stop-color="#5e4e3a"/><stop offset="1" stop-color="#3a2e20"/></linearGradient><radialGradient id="g30" cx=".62" cy=".3" r=".8"><stop offset="0" stop-color="#55565e"/><stop offset=".55" stop-color="#38383e"/><stop offset="1" stop-color="#1c1c20"/></radialGradient><linearGradient id="g31" gradientUnits="userSpaceOnUse" x1="1434.2" y1="746.3" x2="1448.9" y2="778.4"><stop offset="0" stop-color="#84625e"/><stop offset=".1" stop-color="#b08886"/><stop offset=".3" stop-color="#cca6a4"/><stop offset=".55" stop-color="#b08886"/><stop offset=".82" stop-color="#7a5654"/><stop offset="1" stop-color="#4a3230"/></linearGradient><linearGradient id="g32" gradientUnits="userSpaceOnUse" x1="1558.1" y1="690.1" x2="1572.4" y2="721.4"><stop offset="0" stop-color="#7a7ea2"/><stop offset=".1" stop-color="#a8acd0"/><stop offset=".3" stop-color="#c6caea"/><stop offset=".55" stop-color="#a8acd0"/><stop offset=".82" stop-color="#72769a"/><stop offset="1" stop-color="#4a4c68"/></linearGradient><linearGradient id="g33" gradientUnits="userSpaceOnUse" x1="1675.4" y1="638.6" x2="1688.1" y2="666.2"><stop offset="0" stop-color="#3a3b40"/><stop offset=".1" stop-color="#636469"/><stop offset=".3" stop-color="#7e7f88"/><stop offset=".55" stop-color="#636469"/><stop offset=".82" stop-color="#404147"/><stop offset="1" stop-color="#26262a"/></linearGradient><linearGradient id="g34" gradientUnits="userSpaceOnUse" x1="1533.4" y1="793.1" x2="1551.0" y2="827.1"><stop offset="0" stop-color="#6a5434"/><stop offset=".1" stop-color="#90764c"/><stop offset=".3" stop-color="#a89066"/><stop offset=".55" stop-color="#90764c"/><stop offset=".82" stop-color="#5e4829"/><stop offset="1" stop-color="#382a16"/></linearGradient><linearGradient id="g35" gradientUnits="userSpaceOnUse" x1="1652.8" y1="731.8" x2="1670.1" y2="765.2"><stop offset="0" stop-color="#4a4c56"/><stop offset=".1" stop-color="#6a6c7c"/><stop offset=".3" stop-color="#8a8da0"/><stop offset=".55" stop-color="#6a6c7c"/><stop offset=".82" stop-color="#46474f"/><stop offset="1" stop-color="#2a2a30"/></linearGradient><linearGradient id="g36" gradientUnits="userSpaceOnUse" x1="1768.7" y1="673.7" x2="1784.5" y2="704.3"><stop offset="0" stop-color="#6a5c48"/><stop offset=".1" stop-color="#8e7e68"/><stop offset=".3" stop-color="#b4a898"/><stop offset=".55" stop-color="#8e7e68"/><stop offset=".82" stop-color="#5e4e3a"/><stop offset="1" stop-color="#3a2e20"/></linearGradient><radialGradient id="g37" cx=".62" cy=".3" r=".8"><stop offset="0" stop-color="#55565e"/><stop offset=".55" stop-color="#38383e"/><stop offset="1" stop-color="#1c1c20"/></radialGradient><linearGradient id="g38" gradientUnits="userSpaceOnUse" x1="466.0" y1="590.6" x2="472.8" y2="618.8"><stop offset="0" stop-color="#302c2a"/><stop offset=".1" stop-color="#4a4542"/><stop offset=".3" stop-color="#625c58"/><stop offset=".55" stop-color="#4a4542"/><stop offset=".82" stop-color="#322e2c"/><stop offset="1" stop-color="#1e1c1c"/></linearGradient><linearGradient id="g39" gradientUnits="userSpaceOnUse" x1="597.3" y1="557.9" x2="604.5" y2="587.6"><stop offset="0" stop-color="#3e4048"/><stop offset=".1" stop-color="#6e7186"/><stop offset=".3" stop-color="#898ca0"/><stop offset=".55" stop-color="#6e7186"/><stop offset=".82" stop-color="#484a5a"/><stop offset="1" stop-color="#2a2c34"/></linearGradient><linearGradient id="g40" gradientUnits="userSpaceOnUse" x1="703.7" y1="533.0" x2="710.5" y2="561.0"><stop offset="0" stop-color="#3c3d42"/><stop offset=".1" stop-color="#62636a"/><stop offset=".3" stop-color="#787982"/><stop offset=".55" stop-color="#62636a"/><stop offset=".82" stop-color="#44454c"/><stop offset="1" stop-color="#28282c"/></linearGradient><linearGradient id="g41" gradientUnits="userSpaceOnUse" x1="728.1" y1="528.0" x2="734.5" y2="554.3"><stop offset="0" stop-color="#4a4c58"/><stop offset=".1" stop-color="#828492"/><stop offset=".3" stop-color="#9c9eae"/><stop offset=".55" stop-color="#828492"/><stop offset=".82" stop-color="#585a6c"/><stop offset="1" stop-color="#34353e"/></linearGradient><linearGradient id="g42" gradientUnits="userSpaceOnUse" x1="777.0" y1="517.7" x2="782.7" y2="541.0"><stop offset="0" stop-color="#3a3b40"/><stop offset=".1" stop-color="#636469"/><stop offset=".3" stop-color="#7e7f88"/><stop offset=".55" stop-color="#636469"/><stop offset=".82" stop-color="#404147"/><stop offset="1" stop-color="#26262a"/></linearGradient><linearGradient id="g43" gradientUnits="userSpaceOnUse" x1="535.9" y1="654.0" x2="544.3" y2="685.3"><stop offset="0" stop-color="#302c2a"/><stop offset=".1" stop-color="#4a4542"/><stop offset=".3" stop-color="#625c58"/><stop offset=".55" stop-color="#4a4542"/><stop offset=".82" stop-color="#322e2c"/><stop offset="1" stop-color="#1e1c1c"/></linearGradient><linearGradient id="g44" gradientUnits="userSpaceOnUse" x1="699.0" y1="610.1" x2="707.5" y2="641.6"><stop offset="0" stop-color="#30323c"/><stop offset=".1" stop-color="#50546a"/><stop offset=".3" stop-color="#686c86"/><stop offset=".55" stop-color="#50546a"/><stop offset=".82" stop-color="#36384a"/><stop offset="1" stop-color="#22242c"/></linearGradient><linearGradient id="g45" gradientUnits="userSpaceOnUse" x1="861.3" y1="567.5" x2="869.3" y2="597.2"><stop offset="0" stop-color="#2e3038"/><stop offset=".1" stop-color="#484c5e"/><stop offset=".3" stop-color="#5e6276"/><stop offset=".55" stop-color="#484c5e"/><stop offset=".82" stop-color="#30323e"/><stop offset="1" stop-color="#1e2026"/></linearGradient><filter id="tex" filterUnits="userSpaceOnUse" x="860" y="410" width="980" height="450" color-interpolation-filters="sRGB">
<feTurbulence type="fractalNoise" baseFrequency="0.15" numOctaves="3" seed="11" result="n"/>
<feColorMatrix in="n" type="matrix" values="0 0 0 0 1  0 0 0 0 1  0 0 0 0 1  0.4 0 0 0 -0.165" result="w"/>
<feComposite in="w" in2="SourceAlpha" operator="in" result="wm"/>
<feColorMatrix in="n" type="matrix" values="0 0 0 0 0  0 0 0 0 0  0 0 0 0 0.02  0 0.34 0 0 -0.145" result="d"/>
<feComposite in="d" in2="SourceAlpha" operator="in" result="dm"/>
<feMerge><feMergeNode in="SourceGraphic"/><feMergeNode in="wm"/><feMergeNode in="dm"/></feMerge>
</filter><filter id="tex2" filterUnits="userSpaceOnUse" x="380" y="480" width="560" height="240" color-interpolation-filters="sRGB">
<feTurbulence type="fractalNoise" baseFrequency="0.12" numOctaves="3" seed="5" result="n"/>
<feColorMatrix in="n" type="matrix" values="0 0 0 0 1  0 0 0 0 1  0 0 0 0 1  0.3 0 0 0 -0.13" result="w"/>
<feComposite in="w" in2="SourceAlpha" operator="in" result="wm"/>
<feColorMatrix in="n" type="matrix" values="0 0 0 0 0  0 0 0 0 0  0 0 0 0 0.02  0 0.35 0 0 -0.15" result="d"/>
<feComposite in="d" in2="SourceAlpha" operator="in" result="dm"/>
<feMerge><feMergeNode in="SourceGraphic"/><feMergeNode in="wm"/><feMergeNode in="dm"/></feMerge>
</filter></defs>
<rect x="346" y="293" width="1557" height="717" fill="#95b9cb"/>
<g filter="url(#tex)"><polygon points="1131.8,436.0 1152.9,425.7 1157.0,425.2 1160.5,434.2 1141.6,439.9" fill="#2c2e33"/>
<polygon points="1137.4,446.8 1146.7,449.0 1158.1,446.8 1160.5,437.5 1141.6,439.9" fill="#2c2e33"/>
<polygon points="1147.6,429.5 1152.4,428.0 1153.7,433.4 1148.0,434.4" fill="#95b9cb"/>
<polygon points="1153.0,445.3 1156.8,444.9 1155.6,440.0 1151.3,441.2" fill="#95b9cb"/>
<polygon points="1158.9,434.1 1163.8,431.9 1164.8,435.8 1159.6,437.0" fill="#2c2e33"/>
<polygon points="879.5,503.5 880.9,495.0 883.6,492.3 886.6,490.4 889.6,488.9 892.8,487.7 895.9,486.7 899.1,485.8 902.4,485.0 905.6,484.3 908.9,483.5 912.1,482.8 915.3,482.1 918.6,481.3 921.8,480.6 925.1,479.8 928.3,479.1 931.5,478.4 934.8,477.6 940.5,501.1 937.3,502.0 934.1,502.8 930.8,503.6 927.6,504.5 924.4,505.3 921.2,506.1 918.0,506.9 914.7,507.8 911.5,508.6 908.3,509.4 905.1,510.2 901.8,510.9 898.5,511.5 895.2,511.8 891.8,511.9 888.3,511.6 884.6,510.4 879.5,503.5" fill="url(#g1)"/>
<polygon points="934.8,477.6 937.9,476.9 941.0,476.2 944.1,475.5 947.2,474.7 950.3,474.0 953.4,473.3 956.5,472.6 959.6,471.8 962.7,471.1 965.8,470.4 968.9,469.7 972.0,469.0 975.1,468.2 978.1,467.5 981.2,466.8 984.3,466.1 987.4,465.3 990.5,464.6 993.6,463.9 996.7,463.2 999.8,462.4 1002.9,461.7 1006.0,461.0 1009.1,460.3 1012.2,459.6 1015.3,458.8 1018.4,458.1 1021.5,457.4 1024.6,456.7 1027.7,455.9 1030.8,455.2 1033.9,454.5 1037.0,453.8 1040.1,453.0 1043.2,452.3 1046.3,451.6 1049.4,450.9 1052.5,450.2 1055.6,449.4 1058.7,448.7 1061.8,448.0 1064.9,447.3 1070.0,468.5 1066.9,469.3 1063.9,470.0 1060.8,470.8 1057.7,471.6 1054.6,472.4 1051.5,473.1 1048.4,473.9 1045.3,474.7 1042.3,475.5 1039.2,476.3 1036.1,477.0 1033.0,477.8 1029.9,478.6 1026.8,479.4 1023.8,480.1 1020.7,480.9 1017.6,481.7 1014.5,482.5 1011.4,483.3 1008.3,484.0 1005.3,484.8 1002.2,485.6 999.1,486.4 996.0,487.1 992.9,487.9 989.8,488.7 986.8,489.5 983.7,490.3 980.6,491.0 977.5,491.8 974.4,492.6 971.3,493.4 968.3,494.1 965.2,494.9 962.1,495.7 959.0,496.5 955.9,497.3 952.8,498.0 949.7,498.8 946.7,499.6 943.6,500.4 940.5,501.1" fill="url(#g2)"/>
<polygon points="1064.9,447.3 1068.0,446.5 1071.2,445.8 1074.3,445.0 1077.5,444.3 1080.7,443.6 1083.8,442.8 1088.9,463.7 1085.7,464.5 1082.6,465.3 1079.5,466.1 1076.3,466.9 1073.2,467.7 1070.0,468.5" fill="url(#g3)"/>
<polygon points="1083.8,442.8 1086.5,442.2 1089.2,441.6 1092.0,440.9 1094.7,440.3 1097.4,439.7 1100.1,439.0 1105.1,459.6 1102.4,460.3 1099.7,461.0 1097.0,461.7 1094.3,462.4 1091.6,463.0 1088.9,463.7" fill="url(#g4)"/>
<polygon points="1100.1,439.0 1103.3,438.5 1106.5,437.9 1109.8,437.4 1113.0,436.8 1116.2,436.3 1119.4,435.7 1122.6,435.4 1125.9,435.1 1129.2,434.7 1132.4,434.4 1135.7,434.1 1139.0,433.8 1142.2,433.2 1146.1,435.6 1149.3,435.2 1152.6,434.8 1155.8,434.4 1156.8,438.2 1153.7,439.3 1150.6,440.5 1147.6,441.6 1145.2,445.5 1142.1,446.5 1139.0,447.7 1136.0,448.9 1132.9,450.1 1129.9,451.3 1126.8,452.6 1123.8,453.7 1120.7,454.7 1117.6,455.7 1114.4,456.7 1111.3,457.7 1108.2,458.7 1105.1,459.6" fill="url(#g5)"/>
<path d="M934.8 477.6 Q935.5 489.9 940.5 501.1" stroke="#15151a" stroke-opacity=".45" stroke-width="1.3" fill="none"/>
<path d="M1064.9 447.3 Q1065.5 458.3 1070.0 468.5" stroke="#15151a" stroke-opacity=".45" stroke-width="1.3" fill="none"/>
<path d="M1083.8 442.8 Q1084.5 453.7 1088.9 463.7" stroke="#15151a" stroke-opacity=".45" stroke-width="1.3" fill="none"/>
<path d="M1100.1 439.0 Q1100.8 449.8 1105.1 459.6" stroke="#15151a" stroke-opacity=".45" stroke-width="1.3" fill="none"/>
<polygon points="934.8,477.6 936.3,477.3 937.9,476.9 943.6,500.4 942.0,500.8 940.5,501.1" fill="#101014" fill-opacity=".32"/>
<polygon points="1100.1,439.0 1101.7,438.8 1103.3,438.5 1108.2,458.7 1106.7,459.1 1105.1,459.6" fill="#101014" fill-opacity=".32"/>
<polygon points="879.5,498.5 872.6,503.9 873.1,506.3 881.8,508.0" fill="#74665a"/>
<path d="M870.7 499.8 L874.5 510.4 M870.2 504.6 L873.9 505.9" stroke="#3a3430" stroke-width="1.0" fill="none"/>
<circle cx="872.9" cy="505.1" r="1.5" fill="#2e2a28"/>
<ellipse cx="1109.5" cy="441.5" rx="2.2" ry="1.5" transform="rotate(-13.6 1109.5 441.5)" fill="#6a6052" fill-opacity=".5" stroke="#1e1c1a" stroke-width="1"/>
<polygon points="1179.5,454.4 1200.3,443.9 1204.4,443.4 1207.9,452.4 1189.4,458.1" fill="#2c2e33"/>
<polygon points="1185.2,465.1 1194.7,467.2 1205.7,465.0 1207.9,455.6 1189.4,458.1" fill="#2c2e33"/>
<polygon points="1195.2,447.7 1199.9,446.2 1201.2,451.6 1195.7,452.6" fill="#95b9cb"/>
<polygon points="1200.7,463.5 1204.4,463.1 1203.2,458.2 1198.9,459.5" fill="#95b9cb"/>
<polygon points="1206.3,452.3 1211.1,450.1 1212.1,453.9 1207.0,455.2" fill="#2c2e33"/>
<polygon points="921.5,526.0 922.8,517.6 925.6,514.8 928.6,512.9 931.7,511.4 934.8,510.1 938.1,509.1 941.3,508.2 944.6,507.3 947.8,506.5 951.1,505.8 954.4,505.0 957.7,504.2 960.9,503.4 964.2,502.6 967.5,501.8 970.8,501.1 974.0,500.3 977.3,499.5 983.2,522.8 979.9,523.6 976.7,524.5 973.4,525.4 970.2,526.2 966.9,527.1 963.7,528.0 960.4,528.8 957.2,529.7 953.9,530.6 950.7,531.4 947.4,532.3 944.1,533.0 940.8,533.6 937.4,534.0 934.0,534.1 930.4,533.9 926.7,532.8 921.5,526.0" fill="url(#g6)"/>
<polygon points="977.3,499.5 980.5,498.7 983.6,497.9 986.8,497.2 989.9,496.4 993.1,495.6 996.2,494.9 999.4,494.1 1002.5,493.3 1005.7,492.5 1008.8,491.8 1012.0,491.0 1015.1,490.2 1018.3,489.5 1021.5,488.7 1024.6,487.9 1027.8,487.1 1030.9,486.4 1034.1,485.6 1037.2,484.8 1040.4,484.1 1043.5,483.3 1046.7,482.5 1049.8,481.7 1053.0,481.0 1056.1,480.2 1059.3,479.4 1062.5,478.6 1065.6,477.9 1068.8,477.1 1071.9,476.3 1075.1,475.6 1078.2,474.8 1081.4,474.0 1084.5,473.2 1087.7,472.5 1090.8,471.7 1094.0,470.9 1097.1,470.2 1100.3,469.4 1103.5,468.6 1106.6,467.8 1109.8,467.1 1112.9,466.3 1118.3,487.4 1115.1,488.2 1112.0,489.0 1108.8,489.9 1105.7,490.7 1102.6,491.5 1099.4,492.3 1096.3,493.1 1093.1,494.0 1090.0,494.8 1086.8,495.6 1083.7,496.4 1080.6,497.3 1077.4,498.1 1074.3,498.9 1071.1,499.7 1068.0,500.5 1064.9,501.4 1061.7,502.2 1058.6,503.0 1055.4,503.8 1052.3,504.7 1049.2,505.5 1046.0,506.3 1042.9,507.1 1039.7,507.9 1036.6,508.8 1033.5,509.6 1030.3,510.4 1027.2,511.2 1024.0,512.1 1020.9,512.9 1017.7,513.7 1014.6,514.5 1011.5,515.4 1008.3,516.2 1005.2,517.0 1002.0,517.8 998.9,518.6 995.8,519.5 992.6,520.3 989.5,521.1 986.3,521.9 983.2,522.8" fill="url(#g7)"/>
<polygon points="1112.9,466.3 1116.2,465.5 1119.4,464.7 1122.6,463.9 1125.9,463.1 1129.1,462.3 1132.4,461.5 1137.6,482.3 1134.4,483.2 1131.2,484.0 1127.9,484.8 1124.7,485.7 1121.5,486.5 1118.3,487.4" fill="url(#g8)"/>
<polygon points="1132.4,461.5 1134.7,461.0 1137.0,460.4 1139.3,459.8 1141.6,459.3 1144.0,458.7 1146.3,458.1 1151.5,478.7 1149.2,479.3 1146.9,479.9 1144.6,480.5 1142.3,481.1 1139.9,481.7 1137.6,482.3" fill="url(#g9)"/>
<polygon points="1146.3,458.1 1149.6,457.5 1152.8,456.9 1156.1,456.3 1159.4,455.7 1162.7,455.1 1166.0,454.5 1169.3,454.0 1172.6,453.7 1176.0,453.3 1179.3,452.9 1182.7,452.6 1186.0,452.2 1189.3,451.6 1193.3,453.9 1196.7,453.5 1200.0,453.1 1203.3,452.7 1204.3,456.3 1201.1,457.6 1198.0,458.8 1194.9,460.1 1192.4,463.9 1189.3,465.0 1186.2,466.3 1183.0,467.5 1179.9,468.8 1176.8,470.1 1173.7,471.3 1170.5,472.5 1167.4,473.5 1164.2,474.6 1161.0,475.6 1157.8,476.6 1154.7,477.7 1151.5,478.7" fill="url(#g10)"/>
<path d="M977.3 499.5 Q978.2 511.7 983.2 522.8" stroke="#15151a" stroke-opacity=".45" stroke-width="1.3" fill="none"/>
<path d="M1112.9 466.3 Q1113.7 477.3 1118.3 487.4" stroke="#15151a" stroke-opacity=".45" stroke-width="1.3" fill="none"/>
<path d="M1132.4 461.5 Q1133.1 472.4 1137.6 482.3" stroke="#15151a" stroke-opacity=".45" stroke-width="1.3" fill="none"/>
<path d="M1146.3 458.1 Q1147.0 468.9 1151.5 478.7" stroke="#15151a" stroke-opacity=".45" stroke-width="1.3" fill="none"/>
<polygon points="977.3,499.5 978.9,499.1 980.4,498.7 986.3,521.9 984.7,522.3 983.2,522.8" fill="#101014" fill-opacity=".32"/>
<polygon points="1146.3,458.1 1147.9,457.8 1149.4,457.6 1154.5,477.7 1153.0,478.2 1151.5,478.7" fill="#101014" fill-opacity=".32"/>
<polygon points="921.4,521.0 914.4,526.6 915.0,528.9 923.8,530.4" fill="#74665a"/>
<path d="M912.5 522.5 L916.3 532.9 M912.1 527.2 L915.7 528.5" stroke="#3a3430" stroke-width="1.0" fill="none"/>
<circle cx="914.7" cy="527.7" r="1.5" fill="#2e2a28"/>
<ellipse cx="1155.9" cy="460.4" rx="2.2" ry="1.5" transform="rotate(-14.2 1155.9 460.4)" fill="#6a6052" fill-opacity=".5" stroke="#1e1c1a" stroke-width="1"/>
<polygon points="1291.1,505.5 1299.6,508.7 1315.4,504.9 1314.2,497.1 1293.1,499.4" fill="#443a2a"/>
<polygon points="1313.5,492.1 1321.4,488.6 1322.2,492.7 1314.2,494.6" fill="#4c453c"/>
<polygon points="1285.2,494.0 1293.7,488.7 1305.5,481.8 1309.9,481.6 1313.2,489.6 1293.1,499.4" fill="#524a3e"/>
<polygon points="1024.5,578.0 1025.4,568.8 1028.0,565.8 1030.9,563.6 1034.0,561.9 1037.1,560.4 1040.3,559.2 1043.5,558.1 1046.8,557.2 1050.1,556.2 1053.3,555.3 1056.6,554.4 1059.9,553.4 1063.2,552.5 1066.4,551.6 1069.7,550.7 1073.0,549.7 1076.3,548.8 1079.6,547.9 1082.8,547.0 1090.4,572.7 1087.1,573.7 1083.8,574.7 1080.6,575.6 1077.3,576.6 1074.1,577.6 1070.8,578.6 1067.5,579.6 1064.3,580.6 1061.0,581.6 1057.8,582.5 1054.5,583.5 1051.2,584.5 1047.9,585.3 1044.6,586.0 1041.2,586.5 1037.7,586.7 1034.1,586.4 1030.2,585.3 1024.5,578.0" fill="url(#g11)"/>
<polygon points="1082.8,547.0 1086.1,546.0 1089.3,545.1 1092.5,544.2 1095.8,543.2 1099.0,542.3 1102.2,541.4 1105.4,540.4 1108.7,539.5 1111.9,538.6 1115.1,537.7 1118.4,536.7 1121.6,535.8 1124.8,534.9 1128.1,533.9 1131.3,533.0 1134.5,532.1 1137.8,531.1 1141.0,530.2 1144.2,529.3 1147.4,528.4 1150.7,527.4 1153.9,526.5 1157.1,525.6 1160.4,524.6 1163.6,523.7 1166.8,522.8 1170.1,521.8 1173.3,520.9 1176.5,520.0 1179.8,519.1 1183.0,518.1 1186.2,517.2 1189.4,516.3 1192.7,515.3 1195.9,514.4 1199.1,513.5 1202.4,512.5 1205.6,511.6 1208.8,510.7 1212.1,509.8 1215.3,508.8 1218.5,507.9 1221.8,507.0 1225.0,506.0 1228.2,505.1 1231.4,504.2 1234.7,503.2 1237.9,502.3 1241.1,501.4 1244.4,500.5 1247.6,499.5 1250.8,498.6 1254.1,497.7 1261.1,521.8 1257.9,522.8 1254.7,523.8 1251.5,524.7 1248.3,525.7 1245.0,526.6 1241.8,527.6 1238.6,528.6 1235.4,529.5 1232.1,530.5 1228.9,531.4 1225.7,532.4 1222.5,533.4 1219.3,534.3 1216.0,535.3 1212.8,536.2 1209.6,537.2 1206.4,538.2 1203.1,539.1 1199.9,540.1 1196.7,541.0 1193.5,542.0 1190.3,542.9 1187.0,543.9 1183.8,544.9 1180.6,545.8 1177.4,546.8 1174.1,547.7 1170.9,548.7 1167.7,549.7 1164.5,550.6 1161.3,551.6 1158.0,552.5 1154.8,553.5 1151.6,554.5 1148.4,555.4 1145.1,556.4 1141.9,557.3 1138.7,558.3 1135.5,559.3 1132.3,560.2 1129.0,561.2 1125.8,562.1 1122.6,563.1 1119.4,564.0 1116.1,565.0 1112.9,566.0 1109.7,566.9 1106.5,567.9 1103.3,568.8 1100.0,569.8 1096.8,570.8 1093.6,571.7 1090.4,572.7" fill="url(#g12)"/>
<polygon points="1254.1,497.7 1257.5,497.0 1260.8,496.3 1264.2,495.6 1267.6,494.9 1271.0,494.3 1274.5,493.8 1277.9,493.4 1281.4,493.1 1284.9,492.7 1288.4,492.4 1291.9,492.0 1295.4,491.6 1298.8,491.2 1302.3,490.8 1305.8,490.4 1309.3,490.1 1312.7,489.7 1314.9,496.9 1311.7,498.5 1308.6,500.0 1305.5,501.6 1302.3,503.1 1299.2,504.7 1296.0,506.2 1292.9,507.8 1289.8,509.4 1286.7,510.9 1283.5,512.5 1280.4,514.1 1277.2,515.6 1274.0,516.8 1270.8,518.1 1267.6,519.3 1264.4,520.6 1261.1,521.8" fill="url(#g13)"/>
<path d="M1082.8 547.0 Q1084.3 560.5 1090.4 572.7" stroke="#15151a" stroke-opacity=".45" stroke-width="1.3" fill="none"/>
<path d="M1254.1 497.7 Q1255.4 510.4 1261.1 521.8" stroke="#15151a" stroke-opacity=".45" stroke-width="1.3" fill="none"/>
<polygon points="1082.8,547.0 1084.4,546.5 1085.9,546.1 1093.4,571.8 1091.9,572.2 1090.4,572.7" fill="#101014" fill-opacity=".32"/>
<polygon points="1254.1,497.7 1255.6,497.3 1257.2,497.0 1264.1,520.7 1262.6,521.3 1261.1,521.8" fill="#101014" fill-opacity=".32"/>
<polygon points="1296.5,504.7 1314.5,498.6 1322.7,497.7 1321.9,499.4 1301.5,505.0" fill="#a89474"/>
<polygon points="1024.2,572.6 1017.2,578.9 1017.9,581.2 1027.2,582.8" fill="#74665a"/>
<path d="M1015.4 574.3 L1019.2 585.8 M1014.7 579.5 L1018.6 580.8" stroke="#3a3430" stroke-width="1.0" fill="none"/>
<circle cx="1017.6" cy="580.0" r="1.5" fill="#2e2a28"/>
<ellipse cx="1120.0" cy="537.5" rx="6" ry="2.8" transform="rotate(-16.3 1120.0 537.5)" fill="#e6e6ea" stroke="#1e1e24" stroke-opacity=".6" stroke-width=".7"/>
<ellipse cx="1172.0" cy="523.0" rx="6" ry="2.8" transform="rotate(-16.3 1172.0 523.0)" fill="#e6e6ea" stroke="#1e1e24" stroke-opacity=".6" stroke-width=".7"/>
<ellipse cx="1212.5" cy="511.3" rx="6" ry="2.8" transform="rotate(-16.3 1212.5 511.3)" fill="#e6e6ea" stroke="#1e1e24" stroke-opacity=".6" stroke-width=".7"/>
<ellipse cx="1264.3" cy="500.4" rx="2.4" ry="1.7" transform="rotate(-16.3 1264.3 500.4)" fill="#6a6052" fill-opacity=".5" stroke="#1e1c1a" stroke-width="1"/>
<polygon points="1352.5,534.2 1360.9,536.5 1382.6,530.5 1381.8,523.3 1354.1,527.3" fill="#26272c"/>
<polygon points="1380.9,517.7 1391.5,513.1 1392.2,517.3 1381.7,520.1" fill="#2c2d32"/>
<polygon points="1345.8,521.1 1354.7,516.5 1371.4,507.9 1377.1,507.2 1380.5,514.4 1354.1,527.3" fill="#34363c"/>
<polygon points="1088.5,610.0 1089.0,600.1 1091.6,596.8 1094.5,594.5 1097.6,592.6 1100.7,591.1 1103.9,589.7 1107.2,588.6 1110.5,587.5 1113.8,586.6 1117.1,585.6 1120.4,584.6 1123.8,583.6 1127.1,582.6 1130.4,581.6 1133.7,580.6 1137.0,579.7 1140.3,578.7 1143.7,577.7 1147.0,576.7 1155.5,604.2 1152.2,605.3 1149.0,606.3 1145.7,607.4 1142.4,608.5 1139.1,609.6 1135.8,610.6 1132.5,611.7 1129.2,612.8 1125.9,613.9 1122.6,614.9 1119.4,616.0 1116.0,617.0 1112.7,617.9 1109.3,618.7 1105.8,619.2 1102.3,619.4 1098.6,619.1 1094.6,617.9 1088.5,610.0" fill="url(#g14)"/>
<polygon points="1147.0,576.7 1150.3,575.7 1153.5,574.7 1156.8,573.7 1160.1,572.8 1163.4,571.8 1166.7,570.8 1170.0,569.8 1173.3,568.8 1176.6,567.8 1179.9,566.8 1183.1,565.8 1186.4,564.8 1189.7,563.9 1193.0,562.9 1196.3,561.9 1199.6,560.9 1202.9,559.9 1206.2,558.9 1209.5,557.9 1212.7,556.9 1216.0,555.9 1219.3,555.0 1222.6,554.0 1225.9,553.0 1229.2,552.0 1232.5,551.0 1235.8,550.0 1239.1,549.0 1242.3,548.0 1245.6,547.0 1248.9,546.1 1252.2,545.1 1255.5,544.1 1258.8,543.1 1262.1,542.1 1265.4,541.1 1268.6,540.1 1271.9,539.1 1275.2,538.1 1278.5,537.2 1281.8,536.2 1285.1,535.2 1288.4,534.2 1291.7,533.2 1295.0,532.2 1298.2,531.2 1301.5,530.2 1304.8,529.2 1308.1,528.3 1311.4,527.3 1314.7,526.3 1318.0,525.3 1321.3,524.3 1328.8,548.4 1325.5,549.4 1322.2,550.5 1319.0,551.5 1315.7,552.6 1312.4,553.6 1309.1,554.7 1305.9,555.7 1302.6,556.8 1299.3,557.8 1296.1,558.9 1292.8,560.0 1289.5,561.0 1286.3,562.1 1283.0,563.1 1279.7,564.2 1276.5,565.2 1273.2,566.3 1269.9,567.3 1266.7,568.4 1263.4,569.4 1260.1,570.5 1256.9,571.5 1253.6,572.6 1250.3,573.6 1247.0,574.7 1243.8,575.8 1240.5,576.8 1237.2,577.9 1234.0,578.9 1230.7,580.0 1227.4,581.0 1224.2,582.1 1220.9,583.1 1217.6,584.2 1214.4,585.2 1211.1,586.3 1207.8,587.3 1204.6,588.4 1201.3,589.5 1198.0,590.5 1194.8,591.6 1191.5,592.6 1188.2,593.7 1185.0,594.7 1181.7,595.8 1178.4,596.8 1175.1,597.9 1171.9,598.9 1168.6,600.0 1165.3,601.0 1162.1,602.1 1158.8,603.1 1155.5,604.2" fill="url(#g15)"/>
<polygon points="1321.3,524.3 1324.8,523.5 1328.3,522.7 1331.9,521.9 1335.4,521.1 1339.0,520.5 1342.7,520.0 1346.3,519.5 1352.1,538.1 1348.8,539.7 1345.5,541.4 1342.2,543.0 1338.9,544.3 1335.5,545.7 1332.1,547.0 1328.8,548.4" fill="url(#g16)"/>
<polygon points="1346.3,519.5 1348.3,519.3 1350.3,519.0 1352.3,518.6 1354.2,518.0 1356.2,517.4 1359.1,519.9 1362.4,530.5 1361.4,534.2 1359.5,534.8 1357.6,535.4 1355.7,536.2 1353.9,537.1 1352.1,538.1" fill="url(#g17)"/>
<polygon points="1359.1,519.9 1362.6,519.2 1366.2,518.5 1369.7,517.8 1373.3,517.1 1376.8,516.5 1380.4,515.8 1382.2,521.8 1378.9,523.3 1375.6,524.7 1372.3,526.2 1369.0,527.6 1365.7,529.1 1362.4,530.5" fill="url(#g18)"/>
<path d="M1147.0 576.7 Q1148.8 591.2 1155.5 604.2" stroke="#15151a" stroke-opacity=".45" stroke-width="1.3" fill="none"/>
<path d="M1321.3 524.3 Q1322.8 537.0 1328.8 548.4" stroke="#15151a" stroke-opacity=".45" stroke-width="1.3" fill="none"/>
<path d="M1346.3 519.5 Q1347.5 529.3 1352.1 538.1" stroke="#15151a" stroke-opacity=".45" stroke-width="1.3" fill="none"/>
<path d="M1359.1 519.9 Q1359.8 525.5 1362.4 530.5" stroke="#15151a" stroke-opacity=".45" stroke-width="1.3" fill="none"/>
<polygon points="1147.0,576.7 1148.5,576.2 1150.0,575.8 1158.6,603.2 1157.1,603.7 1155.5,604.2" fill="#101014" fill-opacity=".32"/>
<polygon points="1358.0,533.4 1382.0,525.0 1392.9,523.4 1391.8,525.6 1365.0,533.4" fill="#6a6c78"/>
<polygon points="1088.0,604.1 1081.1,611.0 1081.8,613.3 1091.4,615.1" fill="#74665a"/>
<path d="M1079.3 605.9 L1083.1 618.4 M1078.3 611.7 L1082.5 613.0" stroke="#3a3430" stroke-width="1.0" fill="none"/>
<circle cx="1081.5" cy="612.2" r="1.5" fill="#2e2a28"/>
<ellipse cx="1186.0" cy="567.5" rx="6.5" ry="3" transform="rotate(-17.3 1186.0 567.5)" fill="#e6e6ea" stroke="#1e1e24" stroke-opacity=".6" stroke-width=".7"/>
<ellipse cx="1238.3" cy="551.5" rx="6.5" ry="3" transform="rotate(-17.3 1238.3 551.5)" fill="#e6e6ea" stroke="#1e1e24" stroke-opacity=".6" stroke-width=".7"/>
<ellipse cx="1281.3" cy="538.8" rx="6.5" ry="3" transform="rotate(-17.3 1281.3 538.8)" fill="#e6e6ea" stroke="#1e1e24" stroke-opacity=".6" stroke-width=".7"/>
<ellipse cx="1331.7" cy="526.8" rx="2.4" ry="1.7" transform="rotate(-17.3 1331.7 526.8)" fill="#6a6052" fill-opacity=".5" stroke="#1e1c1a" stroke-width="1"/>
<polygon points="1434.4,559.1 1443.0,561.3 1457.3,557.1 1455.9,550.0 1436.0,552.5" fill="#3e4052"/>
<polygon points="1454.7,544.8 1461.9,541.0 1462.9,545.1 1455.6,547.2" fill="#4a4c5c"/>
<polygon points="1427.6,546.9 1435.9,540.9 1446.2,533.6 1450.3,533.3 1454.1,541.9 1436.0,552.5" fill="#565a6e"/>
<polygon points="1161.5,634.3 1164.0,630.8 1167.1,629.1 1170.3,627.7 1173.6,626.3 1176.8,625.1 1180.1,623.9 1183.5,622.8 1186.8,621.7 1190.1,620.6 1193.4,619.5 1196.7,618.4 1200.0,617.3 1203.4,616.2 1206.7,615.1 1210.0,614.0 1213.3,612.9 1216.6,611.8 1219.9,610.7 1230.0,639.8 1226.7,641.0 1223.4,642.2 1220.1,643.4 1216.8,644.6 1213.5,645.7 1210.2,646.9 1207.0,648.1 1203.7,649.3 1200.4,650.5 1197.1,651.6 1193.8,652.8 1190.5,654.0 1187.2,655.1 1183.9,656.1 1180.5,657.1 1177.1,657.9 1173.6,658.5 1169.5,657.3" fill="url(#g19)"/>
<polygon points="1219.9,610.7 1223.2,609.6 1226.4,608.6 1229.7,607.5 1232.9,606.4 1236.1,605.3 1239.4,604.2 1242.6,603.1 1245.9,602.1 1249.1,601.0 1252.4,599.9 1255.6,598.8 1258.8,597.7 1262.1,596.6 1265.3,595.5 1268.6,594.5 1271.8,593.4 1275.0,592.3 1278.3,591.2 1281.5,590.1 1284.8,589.0 1288.0,587.9 1291.2,586.9 1294.5,585.8 1297.7,584.7 1301.0,583.6 1304.2,582.5 1307.5,581.4 1310.7,580.4 1313.9,579.3 1317.2,578.2 1320.4,577.1 1323.7,576.0 1326.9,574.9 1330.1,573.8 1333.4,572.8 1336.6,571.7 1339.9,570.6 1343.1,569.5 1346.3,568.4 1349.6,567.3 1352.8,566.3 1356.1,565.2 1359.3,564.1 1362.6,563.0 1365.8,561.9 1369.0,560.8 1372.3,559.7 1375.5,558.7 1378.8,557.6 1382.0,556.5 1385.2,555.4 1388.5,554.3 1391.7,553.2 1395.0,552.2 1403.9,578.1 1400.7,579.2 1397.5,580.3 1394.2,581.5 1391.0,582.6 1387.8,583.8 1384.6,584.9 1381.4,586.1 1378.1,587.2 1374.9,588.4 1371.7,589.5 1368.5,590.6 1365.3,591.8 1362.0,592.9 1358.8,594.1 1355.6,595.2 1352.4,596.4 1349.2,597.5 1345.9,598.7 1342.7,599.8 1339.5,600.9 1336.3,602.1 1333.0,603.2 1329.8,604.4 1326.6,605.5 1323.4,606.7 1320.2,607.8 1316.9,608.9 1313.7,610.1 1310.5,611.2 1307.3,612.4 1304.1,613.5 1300.8,614.7 1297.6,615.8 1294.4,617.0 1291.2,618.1 1288.0,619.2 1284.7,620.4 1281.5,621.5 1278.3,622.7 1275.1,623.8 1271.9,625.0 1268.6,626.1 1265.4,627.3 1262.2,628.4 1259.0,629.5 1255.7,630.7 1252.5,631.8 1249.3,633.0 1246.1,634.1 1242.9,635.3 1239.6,636.4 1236.4,637.6 1233.2,638.7 1230.0,639.8" fill="url(#g20)"/>
<polygon points="1395.0,552.2 1398.3,551.3 1401.7,550.5 1405.1,549.7 1408.5,548.8 1411.9,548.0 1415.3,547.3 1418.8,546.8 1422.3,546.3 1425.8,545.8 1429.2,545.3 1432.7,544.8 1436.2,544.3 1439.7,543.9 1443.2,543.4 1446.8,542.9 1450.3,542.5 1453.8,542.0 1456.4,549.8 1453.4,551.6 1450.4,553.4 1447.3,555.2 1444.3,557.0 1441.2,558.8 1438.2,560.6 1435.1,562.3 1432.1,564.1 1429.0,565.8 1425.9,567.6 1422.9,569.4 1419.8,570.9 1416.6,572.3 1413.4,573.8 1410.2,575.2 1407.1,576.6 1403.9,578.1" fill="url(#g21)"/>
<path d="M1219.9 610.7 Q1222.3 626.2 1230.0 639.8" stroke="#15151a" stroke-opacity=".45" stroke-width="1.3" fill="none"/>
<path d="M1395.0 552.2 Q1397.1 565.9 1403.9 578.1" stroke="#15151a" stroke-opacity=".45" stroke-width="1.3" fill="none"/>
<polygon points="1219.9,610.7 1221.5,610.2 1223.0,609.7 1233.0,638.8 1231.5,639.3 1230.0,639.8" fill="#101014" fill-opacity=".32"/>
<polygon points="1395.0,552.2 1396.5,551.8 1398.1,551.4 1406.8,576.7 1405.4,577.4 1403.9,578.1" fill="#101014" fill-opacity=".32"/>
<polygon points="1439.9,558.1 1456.2,551.6 1464.4,551.7 1464.1,554.7 1445.0,559.9" fill="#c2c6e4"/>
<path d="M1181.0 623.7 Q1181.6 640.2 1191.3 653.7" stroke="#2e2210" stroke-opacity=".55" stroke-width=".9" fill="none"/>
<ellipse cx="1405.6" cy="554.8" rx="2.6" ry="1.8" transform="rotate(-19.0 1405.6 554.8)" fill="#6a6052" fill-opacity=".5" stroke="#1e1c1a" stroke-width="1"/>
<polygon points="1509.2,587.0 1517.6,587.9 1531.1,583.6 1529.9,577.4 1510.6,580.0" fill="#443a2a"/>
<polygon points="1528.5,572.1 1535.4,568.2 1536.5,572.3 1529.4,574.5" fill="#4c453c"/>
<polygon points="1501.9,574.5 1510.1,568.0 1519.6,560.5 1523.6,560.2 1527.8,569.0 1510.6,580.0" fill="#524a3e"/>
<polygon points="1232.0,670.8 1234.3,667.0 1237.3,665.2 1240.4,663.7 1243.6,662.2 1246.9,660.9 1250.1,659.7 1253.4,658.5 1256.6,657.3 1259.9,656.1 1263.2,654.9 1266.5,653.8 1269.7,652.6 1273.0,651.4 1276.3,650.2 1279.5,649.0 1282.8,647.9 1286.1,646.7 1289.4,645.5 1300.6,675.5 1297.3,676.8 1294.1,678.0 1290.8,679.3 1287.6,680.5 1284.3,681.8 1281.1,683.0 1277.8,684.3 1274.6,685.5 1271.4,686.8 1268.1,688.0 1264.9,689.3 1261.6,690.5 1258.3,691.7 1255.0,692.8 1251.7,693.8 1248.3,694.7 1244.8,695.3 1240.6,694.0" fill="url(#g23)"/>
<polygon points="1289.4,645.5 1292.7,644.3 1296.0,643.1 1299.3,641.9 1302.6,640.7 1305.9,639.5 1309.3,638.3 1312.6,637.1 1315.9,635.9 1319.2,634.7 1322.5,633.5 1325.8,632.3 1329.1,631.1 1332.5,629.9 1335.8,628.7 1339.1,627.5 1342.4,626.3 1345.7,625.1 1349.0,623.9 1352.4,622.7 1355.7,621.5 1359.0,620.3 1362.3,619.1 1365.6,617.8 1368.9,616.6 1372.2,615.4 1375.6,614.2 1378.9,613.0 1382.2,611.8 1385.5,610.6 1388.8,609.4 1392.1,608.2 1395.4,607.0 1398.8,605.8 1402.1,604.6 1405.4,603.4 1408.7,602.2 1412.0,601.0 1415.3,599.8 1418.7,598.6 1422.0,597.4 1425.3,596.2 1428.6,595.0 1431.9,593.8 1435.2,592.6 1438.5,591.4 1441.9,590.2 1445.2,589.0 1448.5,587.8 1451.8,586.6 1455.1,585.4 1458.4,584.2 1461.7,583.0 1465.1,581.8 1475.1,608.6 1471.8,609.8 1468.5,611.1 1465.2,612.3 1461.9,613.6 1458.6,614.9 1455.3,616.1 1452.0,617.4 1448.7,618.7 1445.4,619.9 1442.1,621.2 1438.8,622.4 1435.6,623.7 1432.3,625.0 1429.0,626.2 1425.7,627.5 1422.4,628.8 1419.1,630.0 1415.8,631.3 1412.5,632.6 1409.2,633.8 1405.9,635.1 1402.6,636.3 1399.3,637.6 1396.0,638.9 1392.7,640.1 1389.5,641.4 1386.2,642.7 1382.9,643.9 1379.6,645.2 1376.3,646.4 1373.0,647.7 1369.7,649.0 1366.4,650.2 1363.1,651.5 1359.8,652.8 1356.5,654.0 1353.2,655.3 1349.9,656.6 1346.7,657.8 1343.4,659.1 1340.1,660.3 1336.8,661.6 1333.5,662.9 1330.2,664.1 1326.9,665.4 1323.6,666.7 1320.3,667.9 1317.0,669.2 1313.7,670.4 1310.4,671.7 1307.1,673.0 1303.9,674.2 1300.6,675.5" fill="url(#g24)"/>
<polygon points="1465.1,581.8 1468.4,580.8 1471.8,579.9 1475.2,578.9 1478.5,578.0 1481.9,577.0 1485.3,576.1 1488.8,575.4 1492.2,574.8 1495.7,574.1 1499.2,573.5 1502.7,572.9 1506.2,572.2 1509.7,571.7 1513.3,571.2 1516.8,570.7 1520.3,570.2 1523.9,569.7 1527.4,569.2 1530.4,577.2 1527.4,579.2 1524.4,581.1 1521.4,583.0 1518.4,585.0 1515.4,586.9 1512.4,588.8 1509.3,590.6 1506.3,592.4 1503.2,594.2 1500.2,596.0 1497.1,597.8 1494.1,599.6 1490.9,601.1 1487.7,602.6 1484.6,604.1 1481.4,605.6 1478.2,607.1 1475.1,608.6" fill="url(#g25)"/>
<path d="M1289.4 645.5 Q1292.3 661.5 1300.6 675.5" stroke="#15151a" stroke-opacity=".45" stroke-width="1.3" fill="none"/>
<path d="M1465.1 581.8 Q1467.6 596.1 1475.1 608.6" stroke="#15151a" stroke-opacity=".45" stroke-width="1.3" fill="none"/>
<polygon points="1289.4,645.5 1290.9,645.0 1292.4,644.4 1303.5,674.3 1302.1,674.9 1300.6,675.5" fill="#101014" fill-opacity=".32"/>
<polygon points="1465.1,581.8 1466.6,581.3 1468.2,580.9 1478.0,607.2 1476.5,607.9 1475.1,608.6" fill="#101014" fill-opacity=".32"/>
<polygon points="1514.8,585.8 1530.3,579.1 1538.3,579.5 1538.4,582.9 1519.9,588.1" fill="#a89474"/>
<path d="M1251.4 659.2 Q1252.5 676.3 1262.9 690.0" stroke="#2e2210" stroke-opacity=".55" stroke-width=".9" fill="none"/>
<ellipse cx="1476.0" cy="584.3" rx="2.7" ry="1.9" transform="rotate(-20.5 1476.0 584.3)" fill="#6a6052" fill-opacity=".5" stroke="#1e1c1a" stroke-width="1"/>
<polygon points="1595.5,619.7 1603.1,618.2 1615.1,613.9 1614.4,609.8 1596.5,612.1" fill="#443a2a"/>
<polygon points="1612.6,604.1 1618.8,600.2 1620.1,604.3 1613.6,606.5" fill="#4c453c"/>
<polygon points="1587.1,605.9 1595.1,598.8 1603.0,591.0 1606.8,590.8 1611.6,600.6 1596.5,612.1" fill="#524a3e"/>
<polygon points="1315.0,714.4 1316.9,709.7 1319.9,707.6 1323.0,705.8 1326.1,704.2 1329.4,702.7 1332.6,701.3 1335.9,700.0 1339.2,698.7 1342.5,697.4 1345.7,696.0 1349.0,694.7 1352.3,693.4 1355.6,692.1 1358.9,690.8 1362.2,689.5 1365.5,688.2 1368.8,686.8 1372.0,685.5 1385.5,718.3 1382.3,719.6 1379.0,721.0 1375.8,722.4 1372.5,723.8 1369.3,725.2 1366.0,726.6 1362.8,728.0 1359.5,729.4 1356.2,730.7 1353.0,732.1 1349.7,733.5 1346.5,734.9 1343.2,736.2 1339.8,737.4 1336.5,738.5 1333.0,739.4 1329.4,740.0 1324.8,738.0" fill="url(#g27)"/>
<polygon points="1372.0,685.5 1375.3,684.2 1378.6,682.9 1381.9,681.6 1385.2,680.2 1388.5,678.9 1391.8,677.6 1395.1,676.2 1398.4,674.9 1401.7,673.6 1405.0,672.3 1408.3,670.9 1411.6,669.6 1414.9,668.3 1418.2,667.0 1421.5,665.6 1424.8,664.3 1428.1,663.0 1431.4,661.6 1434.7,660.3 1438.0,659.0 1441.3,657.7 1444.6,656.3 1447.9,655.0 1451.2,653.7 1454.5,652.4 1457.8,651.0 1461.1,649.7 1464.4,648.4 1467.7,647.0 1471.0,645.7 1474.3,644.4 1477.6,643.1 1480.9,641.7 1484.2,640.4 1487.5,639.1 1490.8,637.8 1494.1,636.4 1497.4,635.1 1500.7,633.8 1504.0,632.5 1507.3,631.1 1510.6,629.8 1513.9,628.5 1517.2,627.1 1520.5,625.8 1523.8,624.5 1527.1,623.2 1530.4,621.8 1533.6,620.5 1536.9,619.2 1540.2,617.9 1543.5,616.5 1546.8,615.2 1550.1,613.9 1562.3,643.5 1559.1,644.8 1555.8,646.2 1552.5,647.6 1549.3,649.0 1546.0,650.4 1542.7,651.8 1539.4,653.2 1536.2,654.5 1532.9,655.9 1529.6,657.3 1526.3,658.7 1523.1,660.1 1519.8,661.5 1516.5,662.8 1513.2,664.2 1510.0,665.6 1506.7,667.0 1503.4,668.4 1500.1,669.8 1496.9,671.2 1493.6,672.5 1490.3,673.9 1487.0,675.3 1483.8,676.7 1480.5,678.1 1477.2,679.5 1473.9,680.9 1470.7,682.2 1467.4,683.6 1464.1,685.0 1460.9,686.4 1457.6,687.8 1454.3,689.2 1451.0,690.6 1447.8,691.9 1444.5,693.3 1441.2,694.7 1437.9,696.1 1434.7,697.5 1431.4,698.9 1428.1,700.2 1424.8,701.6 1421.6,703.0 1418.3,704.4 1415.0,705.8 1411.7,707.2 1408.5,708.6 1405.2,709.9 1401.9,711.3 1398.6,712.7 1395.4,714.1 1392.1,715.5 1388.8,716.9 1385.5,718.3" fill="url(#g28)"/>
<polygon points="1550.1,613.9 1553.6,612.8 1557.1,611.7 1560.6,610.7 1564.0,609.6 1567.5,608.5 1571.0,607.5 1574.6,606.8 1578.2,606.1 1581.8,605.3 1585.5,604.6 1589.1,603.9 1592.7,603.2 1596.4,602.7 1600.1,602.2 1603.8,601.7 1607.6,601.3 1611.3,600.8 1614.9,609.6 1612.0,611.9 1609.0,614.2 1606.0,616.5 1603.0,618.7 1600.0,621.0 1597.0,623.0 1593.9,625.1 1590.8,627.1 1587.8,629.2 1584.7,631.2 1581.6,633.3 1578.4,635.0 1575.2,636.7 1572.0,638.4 1568.8,640.1 1565.6,641.8 1562.3,643.5" fill="url(#g29)"/>
<path d="M1372.0 685.5 Q1375.9 703.1 1385.5 718.3" stroke="#15151a" stroke-opacity=".45" stroke-width="1.3" fill="none"/>
<path d="M1550.1 613.9 Q1553.6 629.8 1562.3 643.5" stroke="#15151a" stroke-opacity=".45" stroke-width="1.3" fill="none"/>
<polygon points="1372.0,685.5 1373.5,684.9 1375.0,684.3 1388.5,717.0 1387.0,717.6 1385.5,718.3" fill="#101014" fill-opacity=".32"/>
<polygon points="1550.1,613.9 1551.7,613.4 1553.2,612.9 1565.2,642.0 1563.8,642.7 1562.3,643.5" fill="#101014" fill-opacity=".32"/>
<polygon points="1601.2,618.4 1615.0,611.7 1623.0,613.1 1623.6,617.5 1606.4,622.0" fill="#a89474"/>
<path d="M1333.9 700.8 Q1335.8 719.7 1347.7 734.4" stroke="#2e2210" stroke-opacity=".55" stroke-width=".9" fill="none"/>
<ellipse cx="1561.6" cy="616.7" rx="3.0" ry="2.1" transform="rotate(-22.4 1561.6 616.7)" fill="#6a6052" fill-opacity=".5" stroke="#1e1c1a" stroke-width="1"/>
<polygon points="1688.5,656.3 1695.3,652.0 1709.9,645.7 1710.4,644.3 1689.5,648.9" fill="#3e4052"/>
<polygon points="1708.6,638.8 1715.9,634.1 1717.3,638.1 1709.7,641.2" fill="#4a4c5c"/>
<polygon points="1679.7,643.5 1688.1,636.2 1698.1,627.2 1702.5,626.5 1707.6,635.6 1689.5,648.9" fill="#565a6e"/>
<polygon points="1407.0,778.2 1405.8,766.5 1408.1,762.4 1410.9,759.3 1413.9,756.8 1417.1,754.6 1420.4,752.7 1423.8,751.0 1427.3,749.4 1430.7,747.9 1434.2,746.3 1437.7,744.8 1441.2,743.2 1444.6,741.7 1448.1,740.2 1451.6,738.6 1455.1,737.1 1458.6,735.5 1462.0,734.0 1465.5,732.5 1469.0,730.9 1483.3,762.2 1479.9,763.8 1476.4,765.4 1473.0,767.1 1469.5,768.7 1466.1,770.3 1462.7,771.9 1459.2,773.6 1455.8,775.2 1452.4,776.8 1448.9,778.4 1445.5,780.0 1442.0,781.7 1438.6,783.2 1435.1,784.7 1431.5,786.0 1427.7,787.0 1423.9,787.6 1419.7,787.7 1415.1,786.7 1407.0,778.2" fill="url(#g31)"/>
<polygon points="1469.0,730.9 1472.4,729.4 1475.7,727.9 1479.1,726.4 1482.5,724.9 1485.9,723.4 1489.3,721.9 1492.6,720.4 1496.0,718.9 1499.4,717.4 1502.8,715.9 1506.1,714.4 1509.5,712.8 1512.9,711.3 1516.3,709.8 1519.7,708.3 1523.0,706.8 1526.4,705.3 1529.8,703.8 1533.2,702.3 1536.6,700.8 1539.9,699.3 1543.3,697.8 1546.7,696.3 1550.1,694.8 1553.4,693.3 1556.8,691.8 1560.2,690.3 1563.6,688.8 1567.0,687.3 1570.3,685.8 1573.7,684.2 1577.1,682.7 1580.5,681.2 1583.9,679.7 1587.2,678.2 1590.6,676.7 1594.0,675.2 1597.4,673.7 1600.7,672.2 1604.1,670.7 1607.5,669.2 1610.9,667.7 1614.3,666.2 1617.6,664.7 1621.0,663.2 1624.4,661.7 1627.8,660.2 1631.2,658.7 1634.5,657.2 1637.9,655.6 1641.3,654.1 1644.7,652.6 1648.1,651.1 1660.7,678.8 1657.4,680.3 1654.0,681.9 1650.7,683.5 1647.3,685.1 1644.0,686.6 1640.6,688.2 1637.3,689.8 1633.9,691.4 1630.6,692.9 1627.2,694.5 1623.9,696.1 1620.5,697.7 1617.2,699.2 1613.8,700.8 1610.5,702.4 1607.1,704.0 1603.8,705.5 1600.5,707.1 1597.1,708.7 1593.8,710.2 1590.4,711.8 1587.1,713.4 1583.7,715.0 1580.4,716.5 1577.0,718.1 1573.7,719.7 1570.3,721.3 1567.0,722.8 1563.6,724.4 1560.3,726.0 1556.9,727.6 1553.6,729.1 1550.2,730.7 1546.9,732.3 1543.5,733.9 1540.2,735.4 1536.9,737.0 1533.5,738.6 1530.2,740.2 1526.8,741.7 1523.5,743.3 1520.1,744.9 1516.8,746.4 1513.4,748.0 1510.1,749.6 1506.7,751.2 1503.4,752.7 1500.0,754.3 1496.7,755.9 1493.3,757.5 1490.0,759.0 1486.6,760.6 1483.3,762.2" fill="url(#g32)"/>
<polygon points="1648.1,651.1 1651.6,649.9 1655.2,648.7 1658.8,647.5 1662.4,646.2 1665.9,645.0 1669.7,644.1 1673.4,643.3 1677.2,642.5 1680.9,641.6 1684.7,640.8 1688.4,640.0 1692.2,639.1 1695.9,638.3 1699.7,637.4 1703.5,636.6 1707.2,635.8 1711.0,644.0 1707.9,646.3 1704.8,648.6 1701.7,650.9 1698.6,653.2 1695.6,655.5 1692.5,657.8 1689.4,660.1 1686.3,662.4 1683.2,664.7 1680.1,667.0 1677.0,669.2 1673.8,671.1 1670.5,673.0 1667.2,675.0 1664.0,676.9 1660.7,678.8" fill="url(#g33)"/>
<path d="M1469.0 730.9 Q1473.3 747.8 1483.3 762.2" stroke="#15151a" stroke-opacity=".45" stroke-width="1.3" fill="none"/>
<path d="M1648.1 651.1 Q1651.9 666.1 1660.7 678.8" stroke="#15151a" stroke-opacity=".45" stroke-width="1.3" fill="none"/>
<polygon points="1469.0,730.9 1470.4,730.3 1471.9,729.6 1486.2,760.8 1484.7,761.5 1483.3,762.2" fill="#101014" fill-opacity=".32"/>
<polygon points="1648.1,651.1 1649.6,650.6 1651.1,650.1 1663.5,677.1 1662.1,678.0 1660.7,678.8" fill="#101014" fill-opacity=".32"/>
<polygon points="1694.3,654.7 1711.0,646.1 1720.4,647.0 1721.2,651.9 1700.8,658.1" fill="#c2c6e4"/>
<polygon points="1405.3,771.4 1399.3,780.4 1400.2,782.6 1411.1,783.9" fill="#74665a"/>
<path d="M1397.5 774.1 L1401.3 789.0 M1396.0 781.0 L1400.7 782.3" stroke="#3a3430" stroke-width="1.0" fill="none"/>
<circle cx="1399.7" cy="781.5" r="1.5" fill="#2e2a28"/>
<ellipse cx="1510.5" cy="716.8" rx="9" ry="4.3" transform="rotate(-24.6 1510.5 716.8)" fill="#e6e6ea" stroke="#1e1e24" stroke-opacity=".6" stroke-width=".7"/>
<ellipse cx="1565.5" cy="691.8" rx="9" ry="4.3" transform="rotate(-24.6 1565.5 691.8)" fill="#e6e6ea" stroke="#1e1e24" stroke-opacity=".6" stroke-width=".7"/>
<ellipse cx="1608.8" cy="672.5" rx="9" ry="4.3" transform="rotate(-24.6 1608.8 672.5)" fill="#e6e6ea" stroke="#1e1e24" stroke-opacity=".6" stroke-width=".7"/>
<ellipse cx="1659.9" cy="653.1" rx="2.8" ry="2.0" transform="rotate(-24.6 1659.9 653.1)" fill="#6a6052" fill-opacity=".5" stroke="#1e1c1a" stroke-width="1"/>
<polygon points="1802.7,674.1 1809.4,669.4 1810.9,673.3 1803.9,676.4" fill="#4c453c"/>
<polygon points="1774.9,678.5 1782.5,670.4 1791.0,661.0 1795.2,660.4 1801.3,670.4 1785.3,684.5" fill="#524a3e"/>
<polygon points="1504.9,813.4 1506.6,808.8 1509.5,806.4 1512.5,804.3 1515.6,802.4 1518.8,800.6 1522.0,798.8 1525.3,797.2 1528.6,795.5 1531.8,793.9 1535.1,792.2 1538.3,790.6 1541.6,788.9 1544.9,787.3 1548.1,785.7 1551.4,784.0 1554.7,782.4 1557.9,780.7 1561.2,779.1 1564.4,777.4 1581.7,810.8 1578.5,812.6 1575.2,814.3 1572.0,816.0 1568.8,817.7 1565.6,819.4 1562.3,821.1 1559.1,822.8 1555.9,824.5 1552.6,826.2 1549.4,827.9 1546.2,829.6 1542.9,831.4 1539.7,833.0 1536.4,834.7 1533.1,836.2 1529.8,837.7 1526.3,838.9 1522.7,839.9 1517.9,838.6" fill="url(#g34)"/>
<polygon points="1564.4,777.4 1567.7,775.8 1571.0,774.1 1574.3,772.4 1577.6,770.8 1580.9,769.1 1584.1,767.4 1587.4,765.7 1590.7,764.1 1594.0,762.4 1597.3,760.7 1600.6,759.0 1603.9,757.4 1607.1,755.7 1610.4,754.0 1613.7,752.4 1617.0,750.7 1620.3,749.0 1623.6,747.3 1626.8,745.7 1630.1,744.0 1633.4,742.3 1636.7,740.7 1640.0,739.0 1643.3,737.3 1646.5,735.6 1649.8,734.0 1653.1,732.3 1656.4,730.6 1659.7,729.0 1663.0,727.3 1666.3,725.7 1669.6,724.0 1672.9,722.4 1676.1,720.7 1679.4,719.0 1682.7,717.4 1686.0,715.7 1689.3,714.1 1692.6,712.4 1695.9,710.7 1699.2,709.1 1702.5,707.4 1705.8,705.8 1709.1,704.1 1712.3,702.5 1715.6,700.8 1718.9,699.1 1722.2,697.5 1725.5,695.8 1728.8,694.2 1732.1,692.5 1735.4,690.8 1738.7,689.2 1742.0,687.5 1757.7,718.1 1754.5,719.8 1751.2,721.5 1748.0,723.3 1744.7,725.0 1741.5,726.7 1738.2,728.4 1735.0,730.2 1731.7,731.9 1728.4,733.6 1725.2,735.3 1721.9,737.1 1718.7,738.8 1715.4,740.5 1712.2,742.2 1708.9,744.0 1705.6,745.7 1702.4,747.4 1699.1,749.1 1695.9,750.9 1692.6,752.6 1689.4,754.3 1686.1,756.0 1682.8,757.7 1679.6,759.5 1676.3,761.2 1673.1,762.9 1669.8,764.6 1666.6,766.4 1663.3,768.1 1660.0,769.8 1656.8,771.5 1653.5,773.2 1650.2,774.9 1647.0,776.6 1643.7,778.3 1640.4,780.0 1637.2,781.8 1633.9,783.5 1630.7,785.2 1627.4,786.9 1624.1,788.6 1620.9,790.3 1617.6,792.0 1614.3,793.7 1611.1,795.4 1607.8,797.2 1604.5,798.9 1601.3,800.6 1598.0,802.3 1594.8,804.0 1591.5,805.7 1588.2,807.4 1585.0,809.1 1581.7,810.8" fill="url(#g35)"/>
<polygon points="1742.0,687.5 1745.5,686.2 1749.0,684.8 1752.6,683.5 1756.1,682.1 1759.6,680.7 1763.3,679.7 1767.0,678.7 1770.8,677.8 1774.5,676.8 1778.3,675.9 1782.0,675.0 1785.8,674.1 1789.6,673.2 1793.4,672.4 1797.2,671.5 1800.9,670.6 1805.7,679.8 1802.8,682.4 1799.9,684.9 1797.0,687.5 1794.1,690.1 1791.2,692.7 1788.2,695.2 1785.3,697.7 1782.4,700.2 1779.4,702.7 1776.5,705.2 1773.5,707.6 1770.3,709.7 1767.2,711.8 1764.0,713.9 1760.9,716.0 1757.7,718.1" fill="url(#g36)"/>
<path d="M1564.4 777.4 Q1570.1 795.7 1581.7 810.8" stroke="#15151a" stroke-opacity=".45" stroke-width="1.3" fill="none"/>
<path d="M1742.0 687.5 Q1747.1 704.2 1757.7 718.1" stroke="#15151a" stroke-opacity=".45" stroke-width="1.3" fill="none"/>
<polygon points="1564.4,777.4 1565.9,776.7 1567.3,776.0 1584.5,809.4 1583.1,810.1 1581.7,810.8" fill="#101014" fill-opacity=".32"/>
<polygon points="1742.0,687.5 1743.5,687.0 1745.0,686.4 1760.4,716.3 1759.1,717.2 1757.7,718.1" fill="#101014" fill-opacity=".32"/>
<polygon points="1790.9,690.9 1805.9,682.0 1815.6,684.0 1817.3,690.0 1798.0,695.8" fill="#a89474"/>
<path d="M1523.4 798.2 Q1527.1 817.9 1541.0 832.4" stroke="#2e2210" stroke-opacity=".55" stroke-width=".9" fill="none"/>
<ellipse cx="1754.2" cy="689.7" rx="3.2" ry="2.3" transform="rotate(-27.3 1754.2 689.7)" fill="#6a6052" fill-opacity=".5" stroke="#1e1c1a" stroke-width="1"/></g><rect x="1026.3" y="465.8" width="2.4" height="2.4" fill="#6cbcf4"/>
<rect x="1033.8" y="461.8" width="2.4" height="2.4" fill="#6cbcf4"/>
<rect x="1154.7" y="434.7" width="3.2" height="3.2" fill="#f4e810"/>
<rect x="1071.8" y="485.8" width="2.4" height="2.4" fill="#6cbcf4"/>
<rect x="1079.8" y="481.6" width="2.4" height="2.4" fill="#6cbcf4"/>
<rect x="1202.2" y="452.9" width="3.2" height="3.2" fill="#f4e810"/>
<rect x="1178.1" y="530.8" width="2.4" height="2.4" fill="#6cbcf4"/>
<rect x="1186.8" y="525.8" width="2.4" height="2.4" fill="#6cbcf4"/>
<rect x="1312.2" y="491.7" width="3.2" height="3.2" fill="#f4e810"/>
<rect x="1244.6" y="559.8" width="2.4" height="2.4" fill="#6cbcf4"/>
<rect x="1253.8" y="554.6" width="2.4" height="2.4" fill="#6cbcf4"/>
<rect x="1379.7" y="517.2" width="3.2" height="3.2" fill="#f4e810"/>
<ellipse cx="1165.5" cy="645.8" rx="8.5" ry="12.4" transform="rotate(-19.0 1165.5 645.8)" fill="url(#g22)"/>
<ellipse cx="1163.0" cy="649.5" rx="3.6" ry="5.2" transform="rotate(-19.0 1163.0 649.5)" fill="#19191c"/>
<rect x="1316.8" y="591.3" width="2.4" height="2.4" fill="#6cbcf4"/>
<rect x="1326.8" y="586.3" width="2.4" height="2.4" fill="#6cbcf4"/>
<rect x="1453.4" y="543.9" width="3.2" height="3.2" fill="#f4e810"/>
<ellipse cx="1236.3" cy="682.4" rx="9.3" ry="12.7" transform="rotate(-20.5 1236.3 682.4)" fill="url(#g26)"/>
<ellipse cx="1233.6" cy="686.4" rx="3.9" ry="5.3" transform="rotate(-20.5 1233.6 686.4)" fill="#19191c"/>
<rect x="1389.6" y="622.8" width="2.4" height="2.4" fill="#6cbcf4"/>
<rect x="1400.1" y="617.1" width="2.4" height="2.4" fill="#6cbcf4"/>
<rect x="1527.2" y="571.4" width="3.2" height="3.2" fill="#f4e810"/>
<ellipse cx="1319.9" cy="726.2" rx="10.5" ry="13.1" transform="rotate(-22.4 1319.9 726.2)" fill="url(#g30)"/>
<ellipse cx="1316.9" cy="730.5" rx="4.4" ry="5.5" transform="rotate(-22.4 1316.9 730.5)" fill="#19191c"/>
<rect x="1473.8" y="659.1" width="2.4" height="2.4" fill="#6cbcf4"/>
<rect x="1484.8" y="653.6" width="2.4" height="2.4" fill="#6cbcf4"/>
<rect x="1610.9" y="602.2" width="3.2" height="3.2" fill="#f4e810"/>
<rect x="1570.1" y="700.8" width="2.4" height="2.4" fill="#6cbcf4"/>
<rect x="1581.8" y="694.6" width="2.4" height="2.4" fill="#6cbcf4"/>
<rect x="1707.2" y="637.7" width="3.2" height="3.2" fill="#f4e810"/>
<ellipse cx="1511.4" cy="826.0" rx="12.3" ry="14.4" transform="rotate(-27.3 1511.4 826.0)" fill="url(#g37)"/>
<ellipse cx="1508.3" cy="831.2" rx="5.2" ry="6.1" transform="rotate(-27.3 1508.3 831.2)" fill="#19191c"/>
<rect x="1666.8" y="743.1" width="2.4" height="2.4" fill="#6cbcf4"/>
<rect x="1679.6" y="736.8" width="2.4" height="2.4" fill="#6cbcf4"/>
<rect x="1801.7" y="672.7" width="3.2" height="3.2" fill="#f4e810"/>
<path d="M346 632.5 L417 616.5" stroke="#30d850" stroke-width="1.3" stroke-dasharray="3 1.5" fill="none"/>
<line x1="412" y1="629" x2="822.5" y2="529.3" stroke="#fff" stroke-width="1.1" fill="none"/><line x1="402.3" y1="590.3" x2="412" y2="629" stroke="#fff" stroke-width="1.1" fill="none"/><line x1="412" y1="629" x2="423.3" y2="643.3" stroke="#fff" stroke-width="1.1" fill="none"/><line x1="818.9" y1="494.5" x2="822.5" y2="529.3" stroke="#fff" stroke-width="1.1" fill="none"/><line x1="822.5" y1="529.3" x2="839.8" y2="539.4" stroke="#fff" stroke-width="1.1" fill="none"/>
<g filter="url(#tex2)"><polygon points="782.7,521.4 812.9,507.3 818.8,506.5 823.3,517.5 796.0,525.5" fill="#2c2e33"/>
<polygon points="789.8,533.9 802.7,536.5 819.2,533.2 823.1,521.5 796.0,525.5" fill="#2c2e33"/>
<polygon points="805.1,512.3 812.0,510.2 813.7,516.9 805.5,518.3" fill="#95b9cb"/>
<polygon points="812.1,531.6 817.5,530.9 816.1,524.9 809.7,526.7" fill="#95b9cb"/>
<polygon points="821.1,517.8 828.3,515.0 829.2,518.9 821.8,520.7" fill="#2c2e33"/>
<polygon points="431.0,614.0 433.9,606.1 437.8,602.6 441.9,599.9 446.1,597.6 450.5,595.7 454.9,594.1 459.3,592.7 463.8,591.5 468.3,590.4 472.8,589.2 477.3,588.1 481.8,587.0 486.3,585.8 490.8,584.7 495.3,583.6 499.9,582.4 504.4,581.3 511.2,609.5 506.7,610.5 502.1,611.6 497.6,612.6 493.1,613.7 488.6,614.7 484.0,615.8 479.5,616.8 475.0,617.9 470.5,618.9 465.9,620.0 461.3,620.8 456.7,621.4 452.0,621.6 447.2,621.6 442.3,621.0 437.2,619.7 431.0,614.0" fill="url(#g38)"/>
<polygon points="504.4,581.3 508.7,580.2 513.0,579.1 517.3,578.0 521.6,576.9 526.0,575.9 530.3,574.8 534.6,573.7 538.9,572.6 543.3,571.5 547.6,570.4 551.9,569.3 556.2,568.3 560.5,567.2 564.9,566.1 569.2,565.0 573.5,563.9 577.8,562.8 582.2,561.7 586.5,560.7 590.8,559.6 595.1,558.5 599.5,557.4 603.8,556.4 608.1,555.4 612.5,554.3 616.8,553.3 621.1,552.3 625.5,551.3 629.8,550.3 634.2,549.3 638.5,548.3 642.9,547.3 647.2,546.3 651.5,545.3 655.9,544.3 660.2,543.3 664.6,542.2 668.9,541.2 673.2,540.2 677.6,539.2 681.9,538.2 686.3,537.2 690.6,536.2 697.4,564.2 693.1,565.3 688.8,566.4 684.4,567.5 680.1,568.6 675.8,569.6 671.5,570.7 667.2,571.8 662.8,572.9 658.5,574.0 654.2,575.1 649.9,576.2 645.6,577.3 641.2,578.4 636.9,579.5 632.6,580.6 628.3,581.7 623.9,582.8 619.6,583.9 615.3,585.0 611.0,586.0 606.7,587.1 602.3,588.1 598.0,589.1 593.6,590.2 589.3,591.2 585.0,592.2 580.6,593.2 576.3,594.2 571.9,595.2 567.6,596.3 563.3,597.3 558.9,598.3 554.6,599.3 550.2,600.3 545.9,601.3 541.6,602.3 537.2,603.4 532.9,604.4 528.6,605.4 524.2,606.4 519.9,607.4 515.5,608.4 511.2,609.5" fill="url(#g39)"/>
<polygon points="690.6,536.2 695.0,535.3 699.4,534.4 703.8,533.5 708.2,532.5 712.6,531.6 717.0,530.7 723.3,557.0 719.0,558.2 714.7,559.4 710.4,560.6 706.0,561.8 701.7,563.0 697.4,564.2" fill="url(#g40)"/>
<polygon points="717.0,530.7 720.7,530.0 724.5,529.4 728.3,528.7 732.1,528.1 735.9,527.4 739.6,526.8 745.3,550.1 741.6,551.2 738.0,552.4 734.3,553.5 730.7,554.7 727.0,555.8 723.3,557.0" fill="url(#g41)"/>
<polygon points="739.6,526.8 744.1,526.0 748.6,525.2 753.0,524.4 757.5,523.6 761.9,522.8 766.4,522.0 770.9,521.3 775.4,520.7 779.9,520.0 784.4,519.4 788.9,518.8 793.4,518.2 798.6,520.5 803.1,519.9 807.6,519.3 812.2,518.7 816.7,518.1 817.7,522.5 813.5,524.0 809.2,525.6 804.9,527.1 800.6,528.6 797.0,533.1 792.7,534.6 788.5,536.1 784.2,537.6 779.9,539.1 775.6,540.6 771.3,542.1 767.0,543.4 762.6,544.7 758.3,546.1 754.0,547.4 749.6,548.8 745.3,550.1" fill="url(#g42)"/>
<path d="M504.4 581.3 Q505.2 596.0 511.2 609.5" stroke="#15151a" stroke-opacity=".45" stroke-width="1.3" fill="none"/>
<path d="M690.6 536.2 Q691.5 550.8 697.4 564.2" stroke="#15151a" stroke-opacity=".45" stroke-width="1.3" fill="none"/>
<path d="M717.0 530.7 Q717.8 544.4 723.3 557.0" stroke="#15151a" stroke-opacity=".45" stroke-width="1.3" fill="none"/>
<path d="M739.6 526.8 Q740.4 538.9 745.3 550.1" stroke="#15151a" stroke-opacity=".45" stroke-width="1.3" fill="none"/>
<polygon points="504.4,581.3 505.9,580.9 507.5,580.5 514.3,608.7 512.8,609.1 511.2,609.5" fill="#101014" fill-opacity=".32"/>
<polygon points="739.6,526.8 741.2,526.5 742.8,526.2 748.4,549.1 746.8,549.6 745.3,550.1" fill="#101014" fill-opacity=".32"/>
<polygon points="431.7,610.0 419.4,613.4 420.0,615.8 433.4,617.3" fill="#74665a"/>
<path d="M417.5 608.7 L421.3 620.5 M416.7 614.1 L420.7 615.4" stroke="#3a3430" stroke-width="1.0" fill="none"/>
<circle cx="419.7" cy="614.6" r="1.5" fill="#2e2a28"/>
<ellipse cx="752.5" cy="529.1" rx="2.3" ry="1.6" transform="rotate(-13.6 752.5 529.1)" fill="#6a6052" fill-opacity=".5" stroke="#1e1c1a" stroke-width="1"/></g><rect x="646.8" y="556.2" width="2.4" height="2.4" fill="#6cbcf4"/>
<rect x="815.6" y="518.7" width="3.2" height="3.2" fill="#f4e810"/>
<rect x="638" y="561" width="3" height="3" fill="#e81010"/>
<line x1="402.3" y1="590.3" x2="818.9" y2="494.5" stroke="#fff" stroke-width="1.1" fill="none"/><line x1="414.7" y1="603.3" x2="837" y2="504.3" stroke="#fff" stroke-width="1.1" fill="none"/><line x1="423.3" y1="643.3" x2="839.8" y2="539.4" stroke="#fff" stroke-width="1.1" fill="none"/><line x1="402.3" y1="590.3" x2="414.7" y2="603.3" stroke="#fff" stroke-width="1.1" fill="none"/><line x1="414.7" y1="603.3" x2="423.3" y2="643.3" stroke="#fff" stroke-width="1.1" fill="none"/><line x1="818.9" y1="494.5" x2="837" y2="504.3" stroke="#fff" stroke-width="1.1" fill="none"/><line x1="837" y1="504.3" x2="839.8" y2="539.4" stroke="#fff" stroke-width="1.1" fill="none"/>
<g filter="url(#tex2)"><polygon points="872.3,587.2 883.8,591.1 907.5,585.6 906.6,576.0 875.5,579.6" fill="#26272c"/>
<polygon points="906.0,570.1 918.0,565.7 918.5,569.9 906.7,572.7" fill="#2c2d32"/>
<polygon points="865.0,573.1 877.2,566.4 895.3,557.4 901.8,556.9 905.7,566.6 875.5,579.6" fill="#34363c"/>
<polygon points="498.0,681.0 500.8,672.8 504.8,668.9 509.0,665.9 513.3,663.3 517.7,661.0 522.2,659.0 526.8,657.3 531.4,655.7 536.0,654.3 540.7,653.0 545.4,651.7 550.0,650.5 554.7,649.2 559.4,647.9 564.1,646.6 568.7,645.3 573.4,644.0 578.1,642.7 586.5,674.0 581.8,675.2 577.1,676.5 572.4,677.7 567.7,678.9 563.0,680.1 558.3,681.4 553.6,682.6 549.0,683.8 544.3,685.0 539.5,686.2 534.8,687.1 530.0,687.9 525.1,688.4 520.1,688.7 515.1,688.6 509.9,688.1 504.6,686.7 498.0,681.0" fill="url(#g43)"/>
<polygon points="578.1,642.7 582.6,641.5 587.2,640.3 591.8,639.0 596.3,637.8 600.9,636.6 605.5,635.3 610.0,634.1 614.6,632.9 619.1,631.6 623.7,630.4 628.3,629.2 632.8,627.9 637.4,626.7 642.0,625.5 646.5,624.3 651.1,623.0 655.7,621.8 660.2,620.6 664.8,619.3 669.4,618.1 673.9,616.9 678.5,615.6 683.0,614.4 687.6,613.2 692.2,612.0 696.7,610.7 701.3,609.5 705.9,608.3 710.5,607.1 715.0,605.9 719.6,604.7 724.2,603.6 728.8,602.4 733.3,601.2 737.9,600.0 742.5,598.8 747.1,597.6 751.6,596.4 756.2,595.2 760.8,594.0 765.3,592.8 769.9,591.6 774.5,590.4 779.1,589.2 783.6,588.0 788.2,586.8 792.8,585.6 797.4,584.4 801.9,583.3 806.5,582.1 811.1,580.9 815.7,579.7 820.2,578.5 828.2,608.2 823.7,609.5 819.1,610.7 814.6,612.0 810.0,613.3 805.4,614.5 800.9,615.8 796.3,617.0 791.8,618.3 787.2,619.6 782.7,620.8 778.1,622.1 773.5,623.3 769.0,624.6 764.4,625.8 759.9,627.1 755.3,628.4 750.8,629.6 746.2,630.9 741.7,632.1 737.1,633.4 732.5,634.7 728.0,635.9 723.4,637.2 718.9,638.4 714.3,639.7 709.8,641.0 705.2,642.2 700.6,643.4 696.1,644.7 691.5,645.9 686.9,647.1 682.4,648.3 677.8,649.5 673.2,650.8 668.7,652.0 664.1,653.2 659.5,654.4 655.0,655.7 650.4,656.9 645.8,658.1 641.3,659.3 636.7,660.6 632.1,661.8 627.6,663.0 623.0,664.2 618.4,665.4 613.9,666.7 609.3,667.9 604.7,669.1 600.2,670.3 595.6,671.6 591.0,672.8 586.5,674.0" fill="url(#g44)"/>
<polygon points="820.2,578.5 824.9,577.6 829.5,576.7 834.2,575.8 838.8,574.9 843.5,574.0 848.2,573.3 852.9,572.8 857.7,572.3 862.4,571.8 867.2,571.2 871.9,570.7 876.7,570.2 881.4,569.6 886.1,569.1 890.9,568.5 895.6,567.9 900.4,567.4 905.1,566.8 907.5,575.8 903.1,577.7 898.7,579.6 894.4,581.5 890.0,583.3 885.6,585.2 881.2,587.1 876.8,589.0 872.5,591.0 868.1,592.9 863.7,594.8 859.4,596.7 855.0,598.7 850.6,600.4 846.1,602.0 841.6,603.5 837.2,605.1 832.7,606.7 828.2,608.2" fill="url(#g45)"/>
<path d="M578.1 642.7 Q579.5 659.1 586.5 674.0" stroke="#15151a" stroke-opacity=".45" stroke-width="1.3" fill="none"/>
<path d="M820.2 578.5 Q821.6 594.1 828.2 608.2" stroke="#15151a" stroke-opacity=".45" stroke-width="1.3" fill="none"/>
<polygon points="578.1,642.7 579.6,642.3 581.2,641.9 589.6,673.2 588.0,673.6 586.5,674.0" fill="#101014" fill-opacity=".32"/>
<polygon points="820.2,578.5 821.8,578.2 823.4,577.9 831.3,607.2 829.7,607.7 828.2,608.2" fill="#101014" fill-opacity=".32"/>
<polygon points="879.9,586.1 906.8,577.9 918.7,575.8 917.2,577.3 887.0,585.5" fill="#6a6c78"/>
<polygon points="498.6,676.8 486.0,683.3 486.6,685.7 500.6,684.3" fill="#74665a"/>
<path d="M484.1 677.8 L487.9 691.2 M483.0 684.0 L487.3 685.3" stroke="#3a3430" stroke-width="1.0" fill="none"/>
<circle cx="486.3" cy="684.5" r="1.5" fill="#2e2a28"/>
<ellipse cx="630.0" cy="632.0" rx="8" ry="3.4" transform="rotate(-15.0 630.0 632.0)" fill="#9c9ca8" stroke="#1e1e24" stroke-opacity=".6" stroke-width=".7"/>
<ellipse cx="703.8" cy="612.5" rx="8" ry="3.4" transform="rotate(-15.0 703.8 612.5)" fill="#9c9ca8" stroke="#1e1e24" stroke-opacity=".6" stroke-width=".7"/>
<ellipse cx="762.5" cy="597.0" rx="8" ry="3.4" transform="rotate(-15.0 762.5 597.0)" fill="#9c9ca8" stroke="#1e1e24" stroke-opacity=".6" stroke-width=".7"/>
<ellipse cx="834.2" cy="581.7" rx="2.9" ry="2.0" transform="rotate(-15.0 834.2 581.7)" fill="#6a6052" fill-opacity=".5" stroke="#1e1c1a" stroke-width="1"/></g><rect x="716.3" y="620.8" width="2.4" height="2.4" fill="#6cbcf4"/>
<rect x="726.3" y="615.8" width="2.4" height="2.4" fill="#6cbcf4"/>
<rect x="904.7" y="569.7" width="3.2" height="3.2" fill="#f4e810"/>
<line x1="534.3" y1="481.4" x2="628" y2="549" stroke="#e05a5a" stroke-width="1"/>
<line x1="599" y1="293" x2="636.5" y2="548" stroke="#3a4ae0" stroke-width="1"/>
<line x1="346" y1="325" x2="1271" y2="1010" stroke="#e02424" stroke-width="0.9"/>
<line x1="389.3" y1="923.5" x2="389.3" y2="967" stroke="#2a3ad0" stroke-width="1.2"/>
<line x1="361.8" y1="952.4" x2="389" y2="967" stroke="#e02020" stroke-width="1.4" stroke-dasharray="1.2 1"/>
<line x1="350.7" y1="980.5" x2="389" y2="967.2" stroke="#20b040" stroke-width="1" stroke-dasharray="3 1"/>
<text x="389.8" y="919.6" font-family="Liberation Sans, sans-serif" font-weight="bold" font-size="10.5" fill="#2a3cc8">y</text>
<text x="360.5" y="949.4" font-family="Liberation Sans, sans-serif" font-weight="bold" font-size="10.5" fill="#e02020">x</text>
<text x="350.8" y="978" font-family="Liberation Sans, sans-serif" font-weight="bold" font-size="10.5" fill="#10b020">z</text>
</svg>
<div class="t" style="left:353.5px;top:72.3px;font:normal 16px/24px 'Liberation Sans', sans-serif;color:#1e4b91;letter-spacing:-0.599px;">92: Node - SH_Torpedo_G7a_TI_FATI</div>
<div class="t" style="left:334.8px;top:106.0px;font:normal 11px/16px 'Liberation Sans', sans-serif;color:#000;letter-spacing:-0.052px;">Type:</div>
<div class="t" style="left:394.8px;top:106.0px;font:normal 11px/16px 'Liberation Sans', sans-serif;color:#000;letter-spacing:0.010px;">4 / 100</div>
<div class="t" style="left:465.0px;top:106.0px;font:normal 11px/16px 'Liberation Sans', sans-serif;color:#000;letter-spacing:-0.117px;">Id:</div>
<div class="t" style="left:334.8px;top:132.0px;font:normal 11px/16px 'Liberation Sans', sans-serif;color:#000;letter-spacing:0.146px;">Index:</div>
<div class="t" style="left:465.0px;top:132.0px;font:normal 11px/16px 'Liberation Sans', sans-serif;color:#000;letter-spacing:0.156px;">Parent id:</div>
<div class="t" style="left:551.5px;top:106.0px;font:normal 11px/16px 'Liberation Sans', sans-serif;color:#000;letter-spacing:-0.019px;">0x29b24c252348ef98</div>
<div class="t" style="left:549.8px;top:132.0px;font:normal 11px/16px 'Liberation Sans', sans-serif;color:#000;letter-spacing:-0.136px;">0x0000000000000000</div>
<div class="t" style="left:420.5px;top:132.0px;font:normal 11px/16px 'Liberation Sans', sans-serif;color:#000;letter-spacing:0.250px;">92</div>
<div class="t" style="left:666.6px;top:106.0px;font:normal 11px/16px 'Liberation Sans', sans-serif;color:#2a1fd0;letter-spacing:0.192px;">New</div>
<div class="t" style="left:344.3px;top:176.5px;font:bold 11.5px/17px 'Liberation Sans', sans-serif;color:#173a88;letter-spacing:-0.147px;">Node positioning</div>
<div class="t" style="left:344.3px;top:208.5px;font:bold 11.5px/17px 'Liberation Sans', sans-serif;color:#173a88;letter-spacing:-0.309px;">Linked 3D model</div>
<div class="t" style="left:344.3px;top:240.5px;font:bold 11.5px/17px 'Liberation Sans', sans-serif;color:#173a88;letter-spacing:-0.129px;">Model preview</div>
<div class="t" style="left:4.0px;top:1030.5px;font:normal 12px/18px 'Liberation Sans', sans-serif;color:#000;letter-spacing:-0.138px;">1 chunk selected</div>
<div class="t" style="left:7.0px;top:72.0px;font:normal 12px/18px 'Liberation Sans', sans-serif;color:#6a6a6a;letter-spacing:0.328px;">All</div>
<div class="t" style="left:8.0px;top:234.5px;font:normal 17px/26px 'Liberation Serif', serif;color:#b0b0b0;letter-spacing:0.000px;">A</div>
<div class="t" style="left:73.0px;top:71.0px;font:normal 11px/16px 'Liberation Sans', sans-serif;color:#000;letter-spacing:0.517px;">0: AuthorInfo</div>
<div class="t" style="left:73.0px;top:89.0px;font:normal 11px/16px 'Liberation Sans', sans-serif;color:#000;letter-spacing:0.033px;">1: Start</div>
<div class="t" style="left:73.0px;top:107.0px;font:normal 11px/16px 'Liberation Sans', sans-serif;color:#000;letter-spacing:-0.250px;">2: G7e_TIIILuTII.tga</div>
<div class="t" style="left:91.5px;top:125.0px;font:normal 11px/16px 'Liberation Sans', sans-serif;color:#000;letter-spacing:0.165px;">3: Embedded image</div>
<div class="t" style="left:72.0px;top:137.5px;font:normal 19px/28px 'Liberation Serif', serif;color:#1f4e79;letter-spacing:0.000px;">A</div>
<div class="t" style="left:91.5px;top:143.0px;font:normal 11px/16px 'Liberation Sans', sans-serif;color:#000;letter-spacing:-0.380px;">4: G7e_TIIILuTII</div>
<div class="t" style="left:91.5px;top:161.0px;font:normal 11px/16px 'Liberation Sans', sans-serif;color:#000;letter-spacing:0.019px;">5: G7e_TIIAmbient Occlusion _MR_.tga</div>
<div class="t" style="left:73.0px;top:179.0px;font:normal 11px/16px 'Liberation Sans', sans-serif;color:#000;letter-spacing:-0.352px;">7: G7a_TI_LuTI.tga</div>
<div class="t" style="left:73.0px;top:197.0px;font:normal 11px/16px 'Liberation Sans', sans-serif;color:#000;letter-spacing:-0.187px;">12: G7e_TIII.tga</div>
<div class="t" style="left:73.0px;top:215.0px;font:normal 11px/16px 'Liberation Sans', sans-serif;color:#000;letter-spacing:-0.315px;">17: G7es_TXI.tga</div>
<div class="t" style="left:73.0px;top:233.0px;font:normal 11px/16px 'Liberation Sans', sans-serif;color:#000;letter-spacing:0.129px;">22: G7e_propeller02.tga</div>
<div class="t" style="left:73.0px;top:251.0px;font:normal 11px/16px 'Liberation Sans', sans-serif;color:#000;letter-spacing:0.129px;">25: G7e_propeller01.tga</div>
<div class="t" style="left:73.0px;top:269.0px;font:normal 11px/16px 'Liberation Sans', sans-serif;color:#000;letter-spacing:-0.150px;">28: G7e_TV.tga</div>
<div class="t" style="left:73.0px;top:287.0px;font:normal 11px/16px 'Liberation Sans', sans-serif;color:#000;letter-spacing:-0.088px;max-width:246.0px;overflow:hidden;">33: T1FaT1_G7a_propeller02VRay_CompleteMap.</div>
<div class="t" style="left:73.0px;top:305.0px;font:normal 11px/16px 'Liberation Sans', sans-serif;color:#000;letter-spacing:-0.088px;max-width:246.0px;overflow:hidden;">36: T1FaT1_G7a_propeller01VRay_CompleteMap.</div>
<div class="t" style="left:73.0px;top:323.0px;font:normal 11px/16px 'Liberation Sans', sans-serif;color:#000;letter-spacing:0.238px;">39: pistol_Propeller.tga</div>
<div class="t" style="left:73.0px;top:341.0px;font:normal 11px/16px 'Liberation Sans', sans-serif;color:#000;letter-spacing:-0.189px;">43: TII_G7e.tga</div>
<div class="t" style="left:73.0px;top:359.0px;font:normal 11px/16px 'Liberation Sans', sans-serif;color:#000;letter-spacing:-0.087px;">47: Node - SH_Torpedo_G7e_TII</div>
<div class="t" style="left:73.0px;top:377.0px;font:normal 11px/16px 'Liberation Sans', sans-serif;color:#000;letter-spacing:-0.300px;">87: TIFaTI_G7a.tga</div>
<div class="t" style="left:73.0px;top:395.0px;font:normal 11px/16px 'Liberation Sans', sans-serif;color:#000;letter-spacing:-0.153px;">92: Node - SH_Torpedo_G7a_TI_FATI</div>
<div class="t" style="left:73.0px;top:413.0px;font:normal 11px/16px 'Liberation Sans', sans-serif;color:#000;letter-spacing:-0.260px;">133: G7a_TI_D.tga</div>
<div class="t" style="left:73.0px;top:431.0px;font:normal 11px/16px 'Liberation Sans', sans-serif;color:#000;letter-spacing:-0.082px;">137: Node - SH_Torpedo_G7a_TI</div>
<div class="t" style="left:73.0px;top:449.0px;font:normal 11px/16px 'Liberation Sans', sans-serif;color:#000;letter-spacing:-0.097px;">175: Node - SH_Torpedo_G7e_TIII</div>
<div class="t" style="left:73.0px;top:467.0px;font:normal 11px/16px 'Liberation Sans', sans-serif;color:#000;letter-spacing:-0.236px;">211: TIIIFaTII_G7e.tga</div>
<div class="t" style="left:73.0px;top:485.0px;font:normal 11px/16px 'Liberation Sans', sans-serif;color:#000;letter-spacing:-0.139px;">215: Node - SH_Torpedo_G7e_TIII_FATII</div>
<div class="t" style="left:73.0px;top:503.0px;font:normal 11px/16px 'Liberation Sans', sans-serif;color:#000;letter-spacing:-0.228px;">251: TIV_G7es.tga</div>
<div class="t" style="left:73.0px;top:521.0px;font:normal 11px/16px 'Liberation Sans', sans-serif;color:#000;letter-spacing:-0.118px;">257: Node - SH_Torpedo_G7es_TIV</div>
<div class="t" style="left:73.0px;top:539.0px;font:normal 11px/16px 'Liberation Sans', sans-serif;color:#000;letter-spacing:-0.130px;">286: Node - SH_Torpedo_G7es_TV</div>
<div class="t" style="left:73.0px;top:557.0px;font:normal 11px/16px 'Liberation Sans', sans-serif;color:#000;letter-spacing:-0.138px;">315: Node - SH_Torpedo_G7es_TXI</div>
<div class="t" style="left:73.0px;top:575.0px;font:normal 11px/16px 'Liberation Sans', sans-serif;color:#000;letter-spacing:-0.097px;">343: TVII_G7ut.tga</div>
<div class="t" style="left:73.0px;top:593.0px;font:normal 11px/16px 'Liberation Sans', sans-serif;color:#000;letter-spacing:-0.034px;">348: Node - SH_Torpedo_G7ut_TVII</div>
<div class="t" style="left:73.0px;top:611.0px;font:normal 11px/16px 'Liberation Sans', sans-serif;color:#000;letter-spacing:-0.157px;">376: Node - SH_Torpedo_G7a_T1-LuT1</div>
<div class="t" style="left:73.0px;top:629.0px;font:normal 11px/16px 'Liberation Sans', sans-serif;color:#000;letter-spacing:-0.136px;">414: Node - SH_Torpedo_G7e_T3-LuT2</div>
<div class="t" style="left:73.0px;top:647.0px;font:normal 11px/16px 'Liberation Sans', sans-serif;color:#000;letter-spacing:-0.064px;">450: End</div>
<div class="t" style="left:73.0px;top:665.0px;font:normal 11px/16px 'Liberation Sans', sans-serif;color:#000;letter-spacing:0.410px;">451: Unknown chunk</div>
<div class="t" style="left:73.0px;top:683.0px;font:normal 11px/16px 'Liberation Sans', sans-serif;color:#000;letter-spacing:0.036px;">452: Index</div>
<div class="t" style="left:73.0px;top:701.0px;font:normal 11px/16px 'Liberation Sans', sans-serif;color:#000;letter-spacing:-0.026px;">453: Eof</div>
<div class="t" style="left:22.0px;top:1.5px;font:normal 12px/18px 'Liberation Sans', sans-serif;color:#000;letter-spacing:0.016px;">Torpedo.dat - Silent 3ditor (v0.9.9)</div>
<div class="t" style="left:7.5px;top:22.5px;font:normal 12px/18px 'Liberation Sans', sans-serif;color:#000;letter-spacing:-0.615px;">File</div>
<div class="t" style="left:39.5px;top:22.5px;font:normal 12px/18px 'Liberation Sans', sans-serif;color:#000;letter-spacing:-0.396px;">Edit</div>
<div class="t" style="left:73.5px;top:22.5px;font:normal 12px/18px 'Liberation Sans', sans-serif;color:#000;letter-spacing:0.121px;">Tools</div>
<div class="t" style="left:116.0px;top:22.5px;font:normal 12px/18px 'Liberation Sans', sans-serif;color:#000;letter-spacing:0.263px;">Window</div>
<div class="t" style="left:174.5px;top:22.5px;font:normal 12px/18px 'Liberation Sans', sans-serif;color:#000;letter-spacing:-0.229px;">Help</div>
<div class="t" style="left:1747.3px;top:47.5px;font:normal 10.5px/16px 'Liberation Sans', sans-serif;color:#000;letter-spacing:-0.455px;">dat</div>
<div class="t" style="left:1770.0px;top:47.5px;font:normal 10.5px/16px 'Liberation Sans', sans-serif;color:#000;letter-spacing:-1.022px;">sim</div>
<div class="t" style="left:1794.0px;top:47.5px;font:normal 10.5px/16px 'Liberation Sans', sans-serif;color:#000;letter-spacing:-0.219px;">zon</div>
<div class="t" style="left:1820.5px;top:47.5px;font:normal 10.5px/16px 'Liberation Sans', sans-serif;color:#8a8a8a;letter-spacing:-0.469px;">val</div>
<div class="t" style="left:1843.0px;top:47.5px;font:normal 10.5px/16px 'Liberation Sans', sans-serif;color:#8a8a8a;letter-spacing:-0.772px;">cam</div>
<div class="t" style="left:1871.0px;top:47.5px;font:normal 10.5px/16px 'Liberation Sans', sans-serif;color:#000;letter-spacing:-0.819px;">dsd</div>
<div class="t" style="left:1898.5px;top:47.0px;font:bold 11px/16px 'Liberation Sans', sans-serif;color:#3a3a3a;letter-spacing:0.000px;">X</div>
<div class="t" style="left:789.5px;top:275.0px;font:bold 12px/18px 'Liberation Sans', sans-serif;color:#d02020;letter-spacing:0.000px;">S</div>
</body></html>
